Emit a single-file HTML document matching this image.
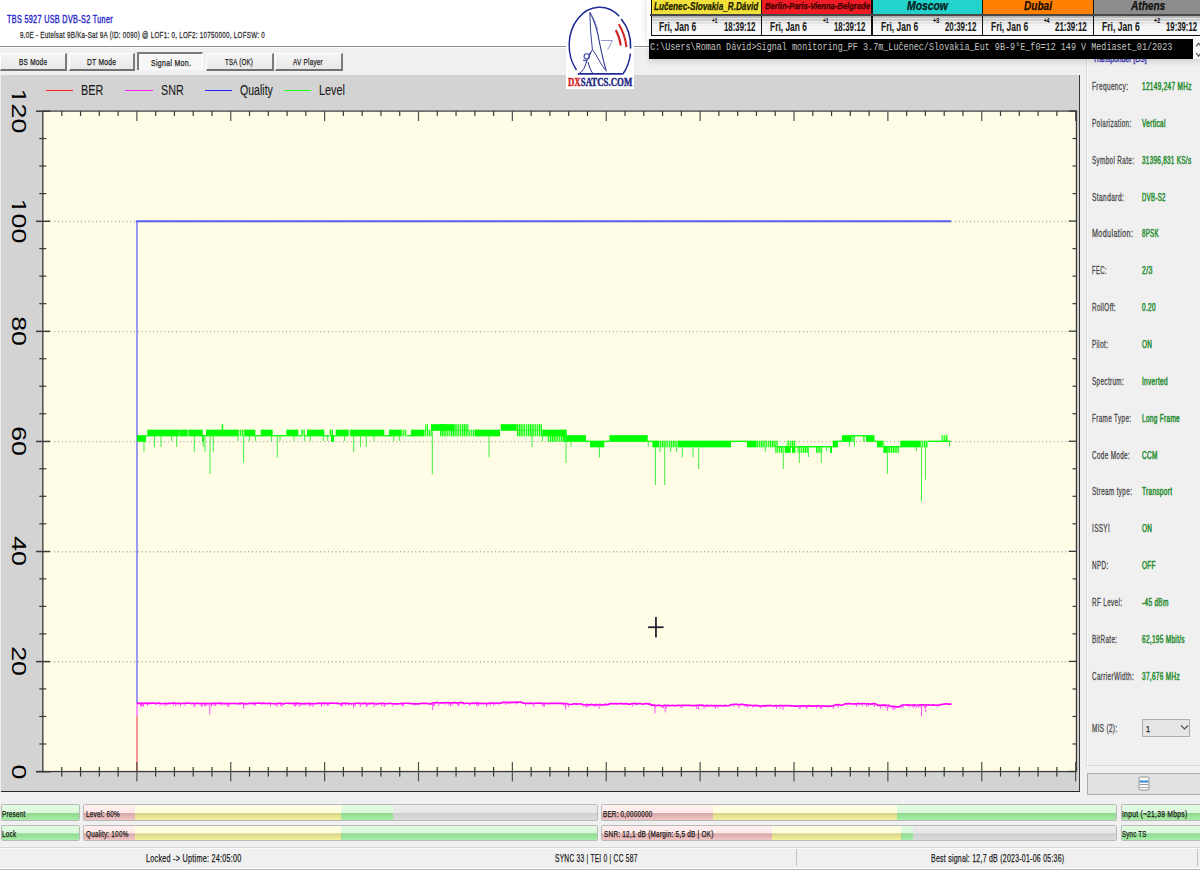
<!DOCTYPE html><html><head><meta charset="utf-8"><style>
*{margin:0;padding:0;box-sizing:border-box}
html,body{width:1200px;height:870px;overflow:hidden;background:#f0f0f0;font-family:"Liberation Sans",sans-serif}
body{position:relative}
.a{position:absolute}
.t{position:absolute;white-space:pre;transform-origin:0 0}
</style></head><body>
<div class="a" style="left:0;top:0;width:1200px;height:46px;background:#fff"></div>
<div class="a" style="left:0;top:46.2px;width:1200px;height:1px;background:#8c8c8c"></div>
<div class="a" style="left:0;top:47.2px;width:1200px;height:1px;background:#fcfcfc"></div>
<div class="t" style="left:7.40px;top:14.20px;font-size:10.60px;line-height:10.60px;color:#2424c8;font-weight:normal;font-style:normal;font-family:'Liberation Sans', sans-serif;transform:scaleX(0.6812);-webkit-text-stroke:0.40px #2424c8;letter-spacing:0.50px;">TBS 5927 USB DVB-S2 Tuner</div>
<div class="t" style="left:19.50px;top:30.30px;font-size:9.40px;line-height:9.40px;color:#333333;font-weight:normal;font-style:normal;font-family:'Liberation Sans', sans-serif;transform:scaleX(0.6663);-webkit-text-stroke:0.30px #333333;letter-spacing:0.40px;">9.0E - Eutelsat 9B/Ka-Sat 9A (ID: 0090) @ LOF1: 0, LOF2: 10750000, LOFSW: 0</div>
<div class="a" style="left:0.0px;top:52.5px;width:67.2px;height:18.8px;background:linear-gradient(#f4f4f4,#e9e9e9);border-top:1px solid #fff;border-left:1px solid #fff;border-right:2px solid #7c7c7c;border-bottom:2px solid #727272"></div>
<div class="t" style="left:19.00px;top:57.10px;font-size:9.80px;line-height:9.80px;color:#1a1a1a;font-weight:normal;font-style:normal;font-family:'Liberation Sans', sans-serif;transform:scaleX(0.6567);-webkit-text-stroke:0.25px #1a1a1a;letter-spacing:0.40px;">BS Mode</div>
<div class="a" style="left:68.5px;top:52.5px;width:66.7px;height:18.8px;background:linear-gradient(#f4f4f4,#e9e9e9);border-top:1px solid #fff;border-left:1px solid #fff;border-right:2px solid #7c7c7c;border-bottom:2px solid #727272"></div>
<div class="t" style="left:87.20px;top:57.10px;font-size:9.80px;line-height:9.80px;color:#1a1a1a;font-weight:normal;font-style:normal;font-family:'Liberation Sans', sans-serif;transform:scaleX(0.6823);-webkit-text-stroke:0.25px #1a1a1a;letter-spacing:0.40px;">DT Mode</div>
<div class="a" style="left:137.1px;top:52px;width:65.9px;height:18px;background:#f7f7f7;border-top:2px solid #7a7a7a;border-left:2px solid #7a7a7a;border-right:1px solid #fff"></div>
<div class="t" style="left:151.10px;top:58.10px;font-size:9.80px;line-height:9.80px;color:#1a1a1a;font-weight:normal;font-style:normal;font-family:'Liberation Sans', sans-serif;transform:scaleX(0.7162);-webkit-text-stroke:0.25px #1a1a1a;letter-spacing:0.40px;">Signal Mon.</div>
<div class="a" style="left:206.0px;top:52.5px;width:67.5px;height:18.8px;background:linear-gradient(#f4f4f4,#e9e9e9);border-top:1px solid #fff;border-left:1px solid #fff;border-right:2px solid #7c7c7c;border-bottom:2px solid #727272"></div>
<div class="t" style="left:225.30px;top:57.10px;font-size:9.80px;line-height:9.80px;color:#1a1a1a;font-weight:normal;font-style:normal;font-family:'Liberation Sans', sans-serif;transform:scaleX(0.6201);-webkit-text-stroke:0.25px #1a1a1a;letter-spacing:0.40px;">TSA (OK)</div>
<div class="a" style="left:275.0px;top:52.5px;width:67.8px;height:18.8px;background:linear-gradient(#f4f4f4,#e9e9e9);border-top:1px solid #fff;border-left:1px solid #fff;border-right:2px solid #7c7c7c;border-bottom:2px solid #727272"></div>
<div class="t" style="left:292.80px;top:57.10px;font-size:9.80px;line-height:9.80px;color:#1a1a1a;font-weight:normal;font-style:normal;font-family:'Liberation Sans', sans-serif;transform:scaleX(0.6457);-webkit-text-stroke:0.25px #1a1a1a;letter-spacing:0.40px;">AV Player</div>
<div class="a" style="left:1px;top:75px;width:1079.4px;height:717px;background:#d3d3d3;border-right:1.3px solid #3a3a3a;border-bottom:1.5px solid #2a2a2a"></div>
<div class="a" style="left:45.6px;top:89.8px;width:27.4px;height:1.4px;background:#ff2020"></div>
<div class="t" style="left:80.83px;top:82.50px;font-size:14.00px;line-height:14.00px;color:#1a1a1a;font-weight:normal;font-style:normal;font-family:'Liberation Sans', sans-serif;transform:scaleX(0.7732);-webkit-text-stroke:0.10px #1a1a1a;letter-spacing:0.00px;">BER</div>
<div class="a" style="left:125.0px;top:89.8px;width:27.7px;height:1.4px;background:#ff20ff"></div>
<div class="t" style="left:160.70px;top:82.50px;font-size:14.00px;line-height:14.00px;color:#1a1a1a;font-weight:normal;font-style:normal;font-family:'Liberation Sans', sans-serif;transform:scaleX(0.7674);-webkit-text-stroke:0.10px #1a1a1a;letter-spacing:0.00px;">SNR</div>
<div class="a" style="left:204.7px;top:89.8px;width:27.3px;height:1.4px;background:#2020ff"></div>
<div class="t" style="left:240.00px;top:82.50px;font-size:14.00px;line-height:14.00px;color:#1a1a1a;font-weight:normal;font-style:normal;font-family:'Liberation Sans', sans-serif;transform:scaleX(0.7551);-webkit-text-stroke:0.10px #1a1a1a;letter-spacing:0.00px;">Quality</div>
<div class="a" style="left:284.0px;top:89.8px;width:27.3px;height:1.4px;background:#20ff20"></div>
<div class="t" style="left:318.52px;top:82.50px;font-size:14.00px;line-height:14.00px;color:#1a1a1a;font-weight:normal;font-style:normal;font-family:'Liberation Sans', sans-serif;transform:scaleX(0.7757);-webkit-text-stroke:0.10px #1a1a1a;letter-spacing:0.00px;">Level</div>
<svg class="a" style="left:0;top:0" width="1200" height="870">
<rect x="43" y="111" width="1033" height="660.5" fill="#fffde6"/>
<line x1="54.3" y1="661.82" x2="1068" y2="661.82" stroke="#a4a49a" stroke-width="1.4" stroke-dasharray="1 2.8"/>
<line x1="54.3" y1="551.74" x2="1068" y2="551.74" stroke="#a4a49a" stroke-width="1.4" stroke-dasharray="1 2.8"/>
<line x1="54.3" y1="441.66" x2="1068" y2="441.66" stroke="#a4a49a" stroke-width="1.4" stroke-dasharray="1 2.8"/>
<line x1="54.3" y1="331.58" x2="1068" y2="331.58" stroke="#a4a49a" stroke-width="1.4" stroke-dasharray="1 2.8"/>
<line x1="54.3" y1="221.50" x2="1068" y2="221.50" stroke="#a4a49a" stroke-width="1.4" stroke-dasharray="1 2.8"/>
<line x1="137" y1="221" x2="137" y2="703" stroke="#9494f4" stroke-width="1.9"/>
<line x1="136.05" y1="221.2" x2="951" y2="221.2" stroke="#5c5cf4" stroke-width="1.9"/>
<line x1="137" y1="703" x2="137" y2="716" stroke="#ff90ff" stroke-width="1.9"/>
<line x1="137" y1="716" x2="137" y2="771" stroke="#ff9090" stroke-width="1.9"/>
<polyline points="137.0,703.28 138.5,703.16 140.0,703.51 141.5,703.10 143.0,703.43 144.5,703.31 146.0,703.10 147.5,703.41 149.0,703.08 150.5,703.36 152.0,703.11 153.5,703.12 155.0,703.36 156.5,703.64 158.0,703.15 159.5,703.22 161.0,703.50 162.5,703.73 164.0,703.47 165.5,703.34 167.0,703.75 168.5,703.10 170.0,703.67 171.5,703.27 173.0,703.17 174.5,703.15 176.0,703.29 177.5,703.64 179.0,703.20 180.5,703.48 182.0,703.52 183.5,703.33 185.0,703.46 186.5,703.12 188.0,703.12 189.5,703.22 191.0,703.55 192.5,703.38 194.0,703.30 195.5,703.49 197.0,703.40 198.5,703.29 200.0,703.64 201.5,703.57 203.0,703.26 204.5,703.49 206.0,703.45 207.5,703.70 209.0,703.60 210.5,703.29 212.0,703.77 213.5,703.17 215.0,703.38 216.5,703.62 218.0,703.20 219.5,703.44 221.0,703.12 222.5,703.56 224.0,703.63 225.5,703.50 227.0,703.71 228.5,703.32 230.0,703.58 231.5,703.52 233.0,703.51 234.5,703.42 236.0,703.69 237.5,703.76 239.0,703.43 240.5,703.57 242.0,703.15 243.5,703.60 245.0,703.56 246.5,703.80 248.0,703.68 249.5,703.31 251.0,703.38 252.5,703.58 254.0,703.13 255.5,703.43 257.0,703.23 258.5,703.19 260.0,703.15 261.5,703.65 263.0,703.21 264.5,703.29 266.0,703.39 267.5,703.73 269.0,703.17 270.5,703.43 272.0,703.50 273.5,703.74 275.0,703.69 276.5,703.73 278.0,703.32 279.5,703.41 281.0,703.38 282.5,703.74 284.0,703.80 285.5,703.23 287.0,703.25 288.5,703.29 290.0,703.29 291.5,703.47 293.0,703.54 294.5,703.32 296.0,703.14 297.5,703.43 299.0,703.39 300.5,703.53 302.0,703.80 303.5,703.62 305.0,703.50 306.5,703.57 308.0,703.61 309.5,703.18 311.0,703.77 312.5,703.69 314.0,703.75 315.5,703.70 317.0,703.42 318.5,703.42 320.0,703.22 321.5,703.59 323.0,703.19 324.5,703.19 326.0,703.29 327.5,703.26 329.0,703.39 330.5,703.19 332.0,703.15 333.5,703.26 335.0,703.23 336.5,703.41 338.0,703.18 339.5,703.77 341.0,703.59 342.5,703.27 344.0,703.34 345.5,703.41 347.0,703.42 348.5,703.25 350.0,703.76 351.5,703.87 353.0,703.50 354.5,703.51 356.0,703.24 357.5,703.25 359.0,703.42 360.5,703.37 362.0,703.76 363.5,703.30 365.0,703.20 366.5,703.85 368.0,703.56 369.5,703.29 371.0,703.57 372.5,703.21 374.0,703.56 375.5,703.88 377.0,703.80 378.5,703.69 380.0,703.38 381.5,703.46 383.0,703.32 384.5,703.74 386.0,703.58 387.5,703.75 389.0,703.44 390.5,703.37 392.0,703.78 393.5,703.90 395.0,703.81 396.5,703.78 398.0,703.79 399.5,703.74 401.0,703.38 402.5,703.58 404.0,703.47 405.5,703.25 407.0,703.25 408.5,703.42 410.0,703.41 411.5,703.72 413.0,703.90 414.5,703.55 416.0,703.89 417.5,703.93 419.0,703.91 420.5,703.49 422.0,703.40 423.5,703.40 425.0,703.38 426.5,703.39 428.0,703.68 429.5,703.88 431.0,703.84 432.5,702.91 434.0,702.81 435.5,702.92 437.0,702.42 438.5,702.83 440.0,703.01 441.5,702.93 443.0,702.91 444.5,702.72 446.0,702.52 447.5,702.95 449.0,702.64 450.5,702.97 452.0,703.10 453.5,702.70 455.0,702.71 456.5,703.09 458.0,702.94 459.5,702.56 461.0,702.54 462.5,702.68 464.0,703.58 465.5,703.51 467.0,703.05 468.5,703.53 470.0,703.64 471.5,703.41 473.0,703.20 474.5,703.33 476.0,703.04 477.5,702.96 479.0,703.63 480.5,703.40 482.0,703.32 483.5,703.60 485.0,703.25 486.5,703.56 488.0,703.53 489.5,703.10 491.0,703.13 492.5,703.16 494.0,703.12 495.5,703.36 497.0,703.13 498.5,703.24 500.0,703.04 501.5,702.91 503.0,702.30 504.5,702.37 506.0,702.46 507.5,702.68 509.0,702.34 510.5,702.69 512.0,702.40 513.5,702.42 515.0,702.42 516.5,702.06 518.0,702.36 519.5,702.18 521.0,702.05 522.5,702.83 524.0,703.07 525.5,703.28 527.0,703.46 528.5,703.34 530.0,703.18 531.5,703.31 533.0,703.34 534.5,703.50 536.0,703.02 537.5,703.34 539.0,703.12 540.5,703.14 542.0,703.49 543.5,703.31 545.0,703.34 546.5,703.48 548.0,703.59 549.5,703.26 551.0,703.38 552.5,703.30 554.0,703.31 555.5,703.43 557.0,703.27 558.5,703.32 560.0,703.28 561.5,703.61 563.0,703.44 564.5,703.56 566.0,703.61 567.5,703.81 569.0,704.24 570.5,704.51 572.0,704.44 573.5,703.95 575.0,703.94 576.5,704.16 578.0,703.90 579.5,704.02 581.0,703.90 582.5,704.44 584.0,704.90 585.5,704.98 587.0,704.46 588.5,704.85 590.0,704.81 591.5,704.45 593.0,704.97 594.5,705.03 596.0,704.50 597.5,705.02 599.0,704.63 600.5,704.69 602.0,705.04 603.5,704.93 605.0,704.46 606.5,704.65 608.0,704.71 609.5,703.91 611.0,703.59 612.5,703.67 614.0,703.96 615.5,703.46 617.0,703.84 618.5,703.76 620.0,703.46 621.5,703.68 623.0,703.89 624.5,703.81 626.0,703.50 627.5,704.14 629.0,704.00 630.5,704.13 632.0,703.52 633.5,703.64 635.0,703.48 636.5,704.00 638.0,703.64 639.5,703.54 641.0,703.75 642.5,704.09 644.0,704.02 645.5,703.63 647.0,703.55 648.5,704.09 650.0,703.85 651.5,705.22 653.0,705.21 654.5,705.19 656.0,705.64 657.5,705.45 659.0,705.21 660.5,705.82 662.0,705.61 663.5,705.73 665.0,705.23 666.5,705.77 668.0,705.22 669.5,705.78 671.0,705.49 672.5,705.41 674.0,705.57 675.5,705.83 677.0,705.37 678.5,705.27 680.0,705.56 681.5,705.36 683.0,705.27 684.5,705.31 686.0,705.23 687.5,705.34 689.0,705.42 690.5,705.41 692.0,705.73 693.5,705.41 695.0,705.56 696.5,705.33 698.0,705.45 699.5,705.22 701.0,705.39 702.5,705.23 704.0,705.73 705.5,705.61 707.0,705.35 708.5,705.56 710.0,705.88 711.5,705.30 713.0,705.80 714.5,705.53 716.0,705.58 717.5,705.82 719.0,705.51 720.5,705.59 722.0,705.72 723.5,705.93 725.0,705.48 726.5,705.83 728.0,705.74 729.5,705.47 731.0,704.63 732.5,704.59 734.0,704.39 735.5,704.44 737.0,704.40 738.5,704.87 740.0,704.53 741.5,704.46 743.0,704.41 744.5,704.94 746.0,704.96 747.5,705.04 749.0,705.45 750.5,705.45 752.0,705.51 753.5,705.65 755.0,705.47 756.5,705.70 758.0,705.60 759.5,706.11 761.0,706.13 762.5,705.84 764.0,705.63 765.5,706.14 767.0,705.69 768.5,705.72 770.0,705.48 771.5,705.75 773.0,705.82 774.5,705.84 776.0,705.63 777.5,705.85 779.0,705.50 780.5,705.69 782.0,705.57 783.5,705.79 785.0,705.55 786.5,705.54 788.0,705.74 789.5,705.69 791.0,705.94 792.5,705.91 794.0,706.07 795.5,706.01 797.0,706.05 798.5,706.17 800.0,705.83 801.5,705.79 803.0,706.26 804.5,705.67 806.0,706.08 807.5,706.03 809.0,705.61 810.5,706.17 812.0,706.21 813.5,706.03 815.0,706.11 816.5,706.17 818.0,705.70 819.5,705.98 821.0,705.97 822.5,706.20 824.0,706.19 825.5,706.21 827.0,706.04 828.5,706.26 830.0,706.12 831.5,706.13 833.0,705.81 834.5,705.42 836.0,704.74 837.5,704.90 839.0,704.72 840.5,705.24 842.0,705.04 843.5,704.79 845.0,703.89 846.5,703.93 848.0,703.79 849.5,703.45 851.0,704.01 852.5,703.97 854.0,703.80 855.5,703.82 857.0,703.91 858.5,703.50 860.0,703.97 861.5,703.63 863.0,703.50 864.5,703.64 866.0,703.96 867.5,703.59 869.0,703.97 870.5,704.13 872.0,703.80 873.5,703.72 875.0,703.79 876.5,704.30 878.0,705.49 879.5,705.38 881.0,705.40 882.5,705.00 884.0,705.05 885.5,705.13 887.0,705.47 888.5,705.16 890.0,706.05 891.5,706.36 893.0,706.39 894.5,706.54 896.0,706.82 897.5,706.83 899.0,706.82 900.5,706.13 902.0,705.01 903.5,704.98 905.0,704.98 906.5,704.73 908.0,705.28 909.5,704.79 911.0,705.33 912.5,705.31 914.0,704.66 915.5,704.97 917.0,705.22 918.5,705.33 920.0,704.96 921.5,704.84 923.0,704.80 924.5,705.31 926.0,704.80 927.5,705.06 929.0,704.75 930.5,705.02 932.0,705.32 933.5,704.74 935.0,705.22 936.5,705.01 938.0,705.27 939.5,705.14 941.0,704.41 942.5,704.48 944.0,704.19 945.5,703.87 947.0,703.85 948.5,704.19 950.0,704.17 951.5,704.06" fill="none" stroke="#ff00ff" stroke-width="1.7"/>
<rect x="254.0" y="703.96" width="0.9" height="2.0" fill="#ff40ff"/>
<rect x="444.6" y="703.24" width="0.9" height="1.5" fill="#ff40ff"/>
<rect x="820.6" y="706.46" width="0.9" height="1.5" fill="#ff40ff"/>
<rect x="402.9" y="704.07" width="0.9" height="2.0" fill="#ff40ff"/>
<rect x="819.7" y="706.46" width="0.9" height="1.5" fill="#ff40ff"/>
<rect x="901.3" y="706.09" width="0.9" height="2.0" fill="#ff40ff"/>
<rect x="717.5" y="706.09" width="0.9" height="2.0" fill="#ff40ff"/>
<rect x="345.1" y="704.01" width="0.9" height="1.5" fill="#ff40ff"/>
<rect x="458.2" y="703.29" width="0.9" height="3.0" fill="#ff40ff"/>
<rect x="201.9" y="703.93" width="0.9" height="2.5" fill="#ff40ff"/>
<rect x="752.1" y="706.16" width="0.9" height="1.5" fill="#ff40ff"/>
<rect x="367.3" y="704.04" width="0.9" height="1.5" fill="#ff40ff"/>
<rect x="816.1" y="706.45" width="0.9" height="2.0" fill="#ff40ff"/>
<rect x="654.3" y="706.00" width="0.9" height="2.0" fill="#ff40ff"/>
<rect x="342.0" y="704.01" width="0.9" height="2.0" fill="#ff40ff"/>
<rect x="493.4" y="703.80" width="0.9" height="2.0" fill="#ff40ff"/>
<rect x="293.8" y="703.98" width="0.9" height="2.0" fill="#ff40ff"/>
<rect x="776.0" y="706.34" width="0.9" height="2.5" fill="#ff40ff"/>
<rect x="856.3" y="704.30" width="0.9" height="2.5" fill="#ff40ff"/>
<rect x="879.9" y="705.80" width="0.9" height="3.0" fill="#ff40ff"/>
<rect x="584.9" y="705.20" width="0.9" height="1.5" fill="#ff40ff"/>
<rect x="180.1" y="703.92" width="0.9" height="2.5" fill="#ff40ff"/>
<rect x="505.2" y="702.90" width="0.9" height="2.0" fill="#ff40ff"/>
<rect x="662.0" y="706.01" width="0.9" height="2.0" fill="#ff40ff"/>
<rect x="533.3" y="703.80" width="0.9" height="3.0" fill="#ff40ff"/>
<rect x="243.1" y="703.95" width="0.9" height="2.5" fill="#ff40ff"/>
<rect x="476.0" y="703.80" width="0.9" height="2.0" fill="#ff40ff"/>
<rect x="381.2" y="704.05" width="0.9" height="2.0" fill="#ff40ff"/>
<rect x="469.0" y="703.80" width="0.9" height="2.0" fill="#ff40ff"/>
<rect x="383.7" y="704.05" width="0.9" height="3.0" fill="#ff40ff"/>
<rect x="681.8" y="706.04" width="0.9" height="1.5" fill="#ff40ff"/>
<rect x="275.5" y="703.97" width="0.9" height="2.0" fill="#ff40ff"/>
<rect x="200.9" y="703.93" width="0.9" height="3.0" fill="#ff40ff"/>
<rect x="873.8" y="704.30" width="0.9" height="2.5" fill="#ff40ff"/>
<rect x="585.8" y="705.20" width="0.9" height="2.5" fill="#ff40ff"/>
<rect x="874.1" y="704.30" width="0.9" height="2.5" fill="#ff40ff"/>
<rect x="486.2" y="703.80" width="0.9" height="3.0" fill="#ff40ff"/>
<rect x="295.8" y="703.98" width="0.9" height="1.5" fill="#ff40ff"/>
<rect x="281.5" y="703.97" width="0.9" height="3.0" fill="#ff40ff"/>
<rect x="213.8" y="703.94" width="0.9" height="2.0" fill="#ff40ff"/>
<rect x="438.3" y="703.22" width="0.9" height="3.0" fill="#ff40ff"/>
<rect x="303.7" y="703.99" width="0.9" height="1.5" fill="#ff40ff"/>
<rect x="747.2" y="705.30" width="0.9" height="2.5" fill="#ff40ff"/>
<rect x="450.1" y="703.26" width="0.9" height="3.0" fill="#ff40ff"/>
<rect x="310.1" y="703.99" width="0.9" height="2.0" fill="#ff40ff"/>
<rect x="413.9" y="704.08" width="0.9" height="1.5" fill="#ff40ff"/>
<rect x="543.5" y="703.80" width="0.9" height="3.0" fill="#ff40ff"/>
<rect x="923.8" y="705.50" width="0.9" height="2.0" fill="#ff40ff"/>
<rect x="696.3" y="706.06" width="0.9" height="3.0" fill="#ff40ff"/>
<rect x="650.0" y="704.30" width="0.9" height="2.0" fill="#ff40ff"/>
<rect x="215.0" y="703.94" width="0.9" height="2.0" fill="#ff40ff"/>
<rect x="451.5" y="703.26" width="0.9" height="2.5" fill="#ff40ff"/>
<rect x="489.8" y="703.80" width="0.9" height="2.0" fill="#ff40ff"/>
<rect x="827.4" y="706.48" width="0.9" height="1.5" fill="#ff40ff"/>
<rect x="243.1" y="703.95" width="0.9" height="2.5" fill="#ff40ff"/>
<rect x="714.7" y="706.08" width="0.9" height="2.5" fill="#ff40ff"/>
<rect x="924.3" y="705.50" width="0.9" height="2.5" fill="#ff40ff"/>
<rect x="140.1" y="703.90" width="0.9" height="2.5" fill="#ff40ff"/>
<rect x="893.5" y="707.20" width="0.9" height="3.0" fill="#ff40ff"/>
<rect x="832.9" y="706.50" width="0.9" height="2.5" fill="#ff40ff"/>
<rect x="341.3" y="704.01" width="0.9" height="1.5" fill="#ff40ff"/>
<rect x="321.3" y="704.00" width="0.9" height="2.0" fill="#ff40ff"/>
<rect x="563.1" y="703.80" width="0.9" height="1.5" fill="#ff40ff"/>
<rect x="902.6" y="705.50" width="0.9" height="2.5" fill="#ff40ff"/>
<rect x="208.9" y="703.94" width="0.9" height="1.5" fill="#ff40ff"/>
<rect x="141.1" y="703.90" width="0.9" height="2.0" fill="#ff40ff"/>
<rect x="328.4" y="704.00" width="0.9" height="1.5" fill="#ff40ff"/>
<rect x="662.9" y="706.01" width="0.9" height="2.0" fill="#ff40ff"/>
<rect x="919.6" y="705.50" width="0.9" height="2.0" fill="#ff40ff"/>
<rect x="567.9" y="704.65" width="0.9" height="2.5" fill="#ff40ff"/>
<rect x="705.9" y="706.07" width="0.9" height="1.5" fill="#ff40ff"/>
<rect x="220.6" y="703.94" width="0.9" height="2.0" fill="#ff40ff"/>
<rect x="564.8" y="703.80" width="0.9" height="3.0" fill="#ff40ff"/>
<rect x="295.3" y="703.98" width="0.9" height="2.0" fill="#ff40ff"/>
<rect x="321.1" y="704.00" width="0.9" height="3.0" fill="#ff40ff"/>
<rect x="140.9" y="703.90" width="0.9" height="3.0" fill="#ff40ff"/>
<rect x="384.2" y="704.05" width="0.9" height="2.5" fill="#ff40ff"/>
<rect x="365.7" y="704.04" width="0.9" height="2.0" fill="#ff40ff"/>
<rect x="662.1" y="706.01" width="0.9" height="2.0" fill="#ff40ff"/>
<rect x="525.0" y="703.80" width="0.9" height="2.0" fill="#ff40ff"/>
<rect x="583.1" y="704.97" width="0.9" height="1.5" fill="#ff40ff"/>
<rect x="918.1" y="705.50" width="0.9" height="2.0" fill="#ff40ff"/>
<rect x="184.8" y="703.92" width="0.9" height="2.0" fill="#ff40ff"/>
<rect x="543.6" y="703.80" width="0.9" height="2.5" fill="#ff40ff"/>
<rect x="205.7" y="703.94" width="0.9" height="2.0" fill="#ff40ff"/>
<rect x="680.6" y="706.04" width="0.9" height="2.0" fill="#ff40ff"/>
<rect x="323.7" y="704.00" width="0.9" height="1.5" fill="#ff40ff"/>
<rect x="703.6" y="706.07" width="0.9" height="2.5" fill="#ff40ff"/>
<rect x="433.5" y="703.20" width="0.9" height="2.5" fill="#ff40ff"/>
<rect x="300.4" y="703.98" width="0.9" height="2.0" fill="#ff40ff"/>
<rect x="738.7" y="705.20" width="0.9" height="3.0" fill="#ff40ff"/>
<rect x="194.6" y="703.93" width="0.9" height="2.5" fill="#ff40ff"/>
<rect x="925.6" y="705.50" width="0.9" height="2.0" fill="#ff40ff"/>
<rect x="760.3" y="706.30" width="0.9" height="2.0" fill="#ff40ff"/>
<rect x="327.0" y="704.00" width="0.9" height="2.0" fill="#ff40ff"/>
<rect x="354.7" y="704.02" width="0.9" height="2.0" fill="#ff40ff"/>
<rect x="228.3" y="703.95" width="0.9" height="3.0" fill="#ff40ff"/>
<rect x="541.6" y="703.80" width="0.9" height="2.0" fill="#ff40ff"/>
<rect x="866.1" y="704.30" width="0.9" height="2.5" fill="#ff40ff"/>
<rect x="477.8" y="703.80" width="0.9" height="1.5" fill="#ff40ff"/>
<rect x="908.5" y="705.50" width="0.9" height="2.0" fill="#ff40ff"/>
<rect x="886.8" y="705.80" width="0.9" height="1.5" fill="#ff40ff"/>
<rect x="312.5" y="703.99" width="0.9" height="3.0" fill="#ff40ff"/>
<rect x="254.9" y="703.96" width="0.9" height="1.5" fill="#ff40ff"/>
<rect x="715.0" y="706.08" width="0.9" height="2.0" fill="#ff40ff"/>
<rect x="458.6" y="703.29" width="0.9" height="2.0" fill="#ff40ff"/>
<rect x="733.5" y="705.20" width="0.9" height="1.5" fill="#ff40ff"/>
<rect x="894.6" y="707.20" width="0.9" height="2.0" fill="#ff40ff"/>
<rect x="294.5" y="703.98" width="0.9" height="3.0" fill="#ff40ff"/>
<rect x="744.5" y="705.20" width="0.9" height="1.5" fill="#ff40ff"/>
<rect x="392.6" y="704.06" width="0.9" height="2.5" fill="#ff40ff"/>
<rect x="819.7" y="706.46" width="0.9" height="2.0" fill="#ff40ff"/>
<rect x="498.4" y="703.80" width="0.9" height="1.5" fill="#ff40ff"/>
<rect x="142.3" y="703.90" width="0.9" height="2.0" fill="#ff40ff"/>
<rect x="205.4" y="703.94" width="0.9" height="2.5" fill="#ff40ff"/>
<rect x="914.0" y="705.50" width="0.9" height="1.5" fill="#ff40ff"/>
<rect x="594.5" y="705.20" width="0.9" height="2.0" fill="#ff40ff"/>
<rect x="447.9" y="703.25" width="0.9" height="2.0" fill="#ff40ff"/>
<rect x="805.8" y="706.42" width="0.9" height="2.5" fill="#ff40ff"/>
<rect x="211.1" y="703.94" width="0.9" height="2.5" fill="#ff40ff"/>
<rect x="298.5" y="703.98" width="0.9" height="3.0" fill="#ff40ff"/>
<rect x="884.8" y="705.80" width="0.9" height="2.0" fill="#ff40ff"/>
<rect x="401.9" y="704.07" width="0.9" height="2.5" fill="#ff40ff"/>
<rect x="164.5" y="703.91" width="0.9" height="2.5" fill="#ff40ff"/>
<rect x="340.9" y="704.01" width="0.9" height="2.5" fill="#ff40ff"/>
<rect x="172.9" y="703.92" width="0.9" height="1.5" fill="#ff40ff"/>
<rect x="515.9" y="702.90" width="0.9" height="1.5" fill="#ff40ff"/>
<rect x="348.2" y="704.02" width="0.9" height="1.5" fill="#ff40ff"/>
<rect x="867.8" y="704.30" width="0.9" height="2.0" fill="#ff40ff"/>
<rect x="434.0" y="703.20" width="0.9" height="2.0" fill="#ff40ff"/>
<rect x="915.7" y="705.50" width="0.9" height="3.0" fill="#ff40ff"/>
<rect x="175.3" y="703.92" width="0.9" height="2.0" fill="#ff40ff"/>
<rect x="888.6" y="705.80" width="0.9" height="2.0" fill="#ff40ff"/>
<rect x="143.1" y="703.90" width="0.9" height="3.0" fill="#ff40ff"/>
<rect x="882.3" y="705.80" width="0.9" height="1.5" fill="#ff40ff"/>
<rect x="159.6" y="703.91" width="0.9" height="2.0" fill="#ff40ff"/>
<rect x="226.9" y="703.95" width="0.9" height="2.5" fill="#ff40ff"/>
<rect x="912.7" y="705.50" width="0.9" height="2.5" fill="#ff40ff"/>
<rect x="779.7" y="706.35" width="0.9" height="2.5" fill="#ff40ff"/>
<rect x="800.0" y="706.41" width="0.9" height="2.0" fill="#ff40ff"/>
<rect x="891.8" y="707.20" width="0.9" height="2.0" fill="#ff40ff"/>
<rect x="147.1" y="703.91" width="0.9" height="2.0" fill="#ff40ff"/>
<rect x="806.4" y="706.43" width="0.9" height="2.0" fill="#ff40ff"/>
<rect x="631.9" y="704.30" width="0.9" height="2.0" fill="#ff40ff"/>
<rect x="837.6" y="705.50" width="0.9" height="2.5" fill="#ff40ff"/>
<rect x="433.1" y="703.20" width="0.9" height="3.0" fill="#ff40ff"/>
<rect x="204.0" y="703.93" width="0.9" height="2.0" fill="#ff40ff"/>
<rect x="457.3" y="703.28" width="0.9" height="2.0" fill="#ff40ff"/>
<rect x="340.3" y="704.01" width="0.9" height="1.5" fill="#ff40ff"/>
<rect x="666.1" y="706.02" width="0.9" height="2.5" fill="#ff40ff"/>
<rect x="587.6" y="705.20" width="0.9" height="2.0" fill="#ff40ff"/>
<rect x="270.2" y="703.97" width="0.9" height="2.5" fill="#ff40ff"/>
<rect x="855.6" y="704.30" width="0.9" height="1.5" fill="#ff40ff"/>
<rect x="354.6" y="704.02" width="0.9" height="1.5" fill="#ff40ff"/>
<rect x="308.8" y="703.99" width="0.9" height="2.5" fill="#ff40ff"/>
<rect x="543.8" y="703.80" width="0.9" height="2.5" fill="#ff40ff"/>
<rect x="280.3" y="703.97" width="0.9" height="2.0" fill="#ff40ff"/>
<rect x="477.6" y="703.80" width="0.9" height="3.0" fill="#ff40ff"/>
<rect x="861.9" y="704.30" width="0.9" height="2.0" fill="#ff40ff"/>
<rect x="745.9" y="705.20" width="0.9" height="1.5" fill="#ff40ff"/>
<rect x="193.5" y="703.43" width="1" height="3.6" fill="#ff50ff"/>
<rect x="209.3" y="703.44" width="1" height="11.1" fill="#ff50ff"/>
<rect x="243.3" y="703.46" width="1" height="5.5" fill="#ff50ff"/>
<rect x="276.5" y="703.47" width="1" height="3.5" fill="#ff50ff"/>
<rect x="353.0" y="703.52" width="1" height="4.3" fill="#ff50ff"/>
<rect x="359.8" y="703.53" width="1" height="3.5" fill="#ff50ff"/>
<rect x="366.2" y="703.54" width="1" height="3.5" fill="#ff50ff"/>
<rect x="373.5" y="703.54" width="1" height="3.5" fill="#ff50ff"/>
<rect x="432.2" y="702.84" width="1" height="7.2" fill="#ff50ff"/>
<rect x="565.2" y="703.30" width="1" height="6.4" fill="#ff50ff"/>
<rect x="598.5" y="704.70" width="1" height="4.1" fill="#ff50ff"/>
<rect x="654.5" y="705.50" width="1" height="7.8" fill="#ff50ff"/>
<rect x="664.7" y="705.52" width="1" height="6.9" fill="#ff50ff"/>
<rect x="698.1" y="705.56" width="1" height="4.1" fill="#ff50ff"/>
<rect x="782.5" y="705.86" width="1" height="4.1" fill="#ff50ff"/>
<rect x="798.5" y="705.91" width="1" height="3.1" fill="#ff50ff"/>
<rect x="821.0" y="705.97" width="1" height="3.0" fill="#ff50ff"/>
<rect x="887.1" y="705.30" width="1" height="5.7" fill="#ff50ff"/>
<rect x="921.0" y="705.00" width="1" height="11.6" fill="#ff50ff"/>
<rect x="925.3" y="705.00" width="1" height="6.9" fill="#ff50ff"/>
<rect x="146.0" y="435.11" width="1.3" height="1.3" fill="#00ff00"/>
<rect x="202.7" y="435.11" width="3.3" height="1.3" fill="#00ff00"/>
<rect x="255.3" y="435.11" width="5.4" height="1.3" fill="#00ff00"/>
<rect x="272.7" y="435.11" width="13.3" height="1.3" fill="#00ff00"/>
<rect x="298.3" y="435.11" width="2.7" height="1.3" fill="#00ff00"/>
<rect x="305.0" y="435.11" width="2.0" height="1.3" fill="#00ff00"/>
<rect x="324.3" y="435.11" width="4.7" height="1.3" fill="#00ff00"/>
<rect x="333.0" y="435.11" width="2.7" height="1.3" fill="#00ff00"/>
<rect x="384.3" y="435.11" width="4.7" height="1.3" fill="#00ff00"/>
<rect x="407.0" y="435.11" width="4.0" height="1.3" fill="#00ff00"/>
<rect x="586.0" y="440.61" width="4.0" height="1.3" fill="#00ff00"/>
<rect x="604.3" y="440.61" width="5.1" height="1.3" fill="#00ff00"/>
<rect x="647.7" y="440.61" width="4.6" height="1.3" fill="#00ff00"/>
<rect x="731.0" y="440.61" width="16.0" height="1.3" fill="#00ff00"/>
<rect x="778.0" y="446.11" width="54.7" height="1.3" fill="#00ff00"/>
<rect x="838.0" y="440.61" width="4.0" height="1.3" fill="#00ff00"/>
<rect x="851.3" y="435.11" width="14.7" height="1.3" fill="#00ff00"/>
<rect x="874.5" y="440.61" width="2.5" height="1.3" fill="#00ff00"/>
<rect x="884.3" y="446.11" width="16.0" height="1.3" fill="#00ff00"/>
<rect x="927.8" y="440.61" width="23.2" height="1.3" fill="#00ff00"/>
<defs><pattern id="st" x="0" y="0" width="2.2" height="10" patternUnits="userSpaceOnUse"><rect x="0" y="0" width="1.2" height="10" fill="#00ff00"/><rect x="1.2" y="0" width="1" height="10" fill="#00ff00" fill-opacity="0.25"/></pattern></defs>
<rect x="137.0" y="435.16" width="9.0" height="6.70" fill="#00ff00"/>
<rect x="147.3" y="429.65" width="30.7" height="6.70" fill="#00ff00"/>
<rect x="178.0" y="429.65" width="1.3" height="6.70" fill="url(#st)"/>
<rect x="179.3" y="429.65" width="8.0" height="6.70" fill="#00ff00"/>
<rect x="187.3" y="429.65" width="1.4" height="6.70" fill="url(#st)"/>
<rect x="188.7" y="429.65" width="14.0" height="6.70" fill="#00ff00"/>
<rect x="202.0" y="435.16" width="2.0" height="6.70" fill="#00ff00"/>
<rect x="206.0" y="429.65" width="32.0" height="6.70" fill="#00ff00"/>
<rect x="238.0" y="429.65" width="6.7" height="6.70" fill="url(#st)"/>
<rect x="244.7" y="429.65" width="10.6" height="6.70" fill="#00ff00"/>
<rect x="260.7" y="429.65" width="12.0" height="6.70" fill="#00ff00"/>
<rect x="221.3" y="424.15" width="2.0" height="6.70" fill="url(#st)"/>
<rect x="286.3" y="429.65" width="12.0" height="6.70" fill="#00ff00"/>
<rect x="301.0" y="429.65" width="4.0" height="6.70" fill="url(#st)"/>
<rect x="307.0" y="429.65" width="17.3" height="6.70" fill="#00ff00"/>
<rect x="329.0" y="429.65" width="4.0" height="6.70" fill="url(#st)"/>
<rect x="331.0" y="435.16" width="3.0" height="6.70" fill="#00ff00"/>
<rect x="335.7" y="429.65" width="12.6" height="6.70" fill="#00ff00"/>
<rect x="348.3" y="429.65" width="2.7" height="6.70" fill="url(#st)"/>
<rect x="351.0" y="429.65" width="33.3" height="6.70" fill="#00ff00"/>
<rect x="389.0" y="429.65" width="12.0" height="6.70" fill="#00ff00"/>
<rect x="401.0" y="429.65" width="6.0" height="6.70" fill="url(#st)"/>
<rect x="411.0" y="429.65" width="13.3" height="6.70" fill="#00ff00"/>
<rect x="424.3" y="429.65" width="7.4" height="6.70" fill="url(#st)"/>
<rect x="425.0" y="424.15" width="3.0" height="6.70" fill="url(#st)"/>
<rect x="431.0" y="424.15" width="13.3" height="6.70" fill="#00ff00"/>
<rect x="440.0" y="424.15" width="14.7" height="6.70" fill="#00ff00"/>
<rect x="454.7" y="424.15" width="14.0" height="6.70" fill="url(#st)"/>
<rect x="440.0" y="429.65" width="16.0" height="6.70" fill="url(#st)"/>
<rect x="456.0" y="429.65" width="19.0" height="6.70" fill="url(#st)"/>
<rect x="475.0" y="429.65" width="25.0" height="6.70" fill="#00ff00"/>
<rect x="500.7" y="424.15" width="16.0" height="6.70" fill="#00ff00"/>
<rect x="516.7" y="424.15" width="25.3" height="6.70" fill="url(#st)"/>
<rect x="516.7" y="429.65" width="24.3" height="6.70" fill="url(#st)"/>
<rect x="541.0" y="429.65" width="25.7" height="6.70" fill="#00ff00"/>
<rect x="547.3" y="435.16" width="16.7" height="6.70" fill="url(#st)"/>
<rect x="564.0" y="435.16" width="22.0" height="6.70" fill="#00ff00"/>
<rect x="590.0" y="440.66" width="14.3" height="6.70" fill="#00ff00"/>
<rect x="609.4" y="435.16" width="38.3" height="6.70" fill="#00ff00"/>
<rect x="652.3" y="440.66" width="6.7" height="6.70" fill="#00ff00"/>
<rect x="659.0" y="440.66" width="19.0" height="6.70" fill="url(#st)"/>
<rect x="678.0" y="440.66" width="53.0" height="6.70" fill="#00ff00"/>
<rect x="747.0" y="440.66" width="9.7" height="6.70" fill="#00ff00"/>
<rect x="756.7" y="440.66" width="21.3" height="6.70" fill="url(#st)"/>
<rect x="775.0" y="446.16" width="8.0" height="6.70" fill="url(#st)"/>
<rect x="784.7" y="446.16" width="6.0" height="6.70" fill="#00ff00"/>
<rect x="792.0" y="446.16" width="3.3" height="6.70" fill="#00ff00"/>
<rect x="797.3" y="446.16" width="11.4" height="6.70" fill="url(#st)"/>
<rect x="816.0" y="446.16" width="6.7" height="6.70" fill="url(#st)"/>
<rect x="830.0" y="446.16" width="2.0" height="6.70" fill="#00ff00"/>
<rect x="786.7" y="440.66" width="8.6" height="6.70" fill="url(#st)"/>
<rect x="832.7" y="440.66" width="5.3" height="6.70" fill="#00ff00"/>
<rect x="842.0" y="435.16" width="9.3" height="6.70" fill="#00ff00"/>
<rect x="851.3" y="435.16" width="3.7" height="6.70" fill="url(#st)"/>
<rect x="863.0" y="435.16" width="2.0" height="6.70" fill="url(#st)"/>
<rect x="866.0" y="435.16" width="8.5" height="6.70" fill="#00ff00"/>
<rect x="877.0" y="440.66" width="5.2" height="6.70" fill="#00ff00"/>
<rect x="882.2" y="440.66" width="2.1" height="6.70" fill="url(#st)"/>
<rect x="883.3" y="446.16" width="5.4" height="6.70" fill="#00ff00"/>
<rect x="888.7" y="446.16" width="10.6" height="6.70" fill="url(#st)"/>
<rect x="900.3" y="440.66" width="19.7" height="6.70" fill="#00ff00"/>
<rect x="920.0" y="440.66" width="7.8" height="6.70" fill="url(#st)"/>
<rect x="941.2" y="435.16" width="6.8" height="6.70" fill="url(#st)"/>
<rect x="143.5" y="441.3" width="1" height="10.4" fill="#40f040"/>
<rect x="153.9" y="435.8" width="1" height="11.2" fill="#40f040"/>
<rect x="160.5" y="435.8" width="1" height="11.2" fill="#40f040"/>
<rect x="171.1" y="435.8" width="1" height="5.2" fill="#40f040"/>
<rect x="176.2" y="435.8" width="1" height="11.2" fill="#40f040"/>
<rect x="193.8" y="435.8" width="1" height="15.9" fill="#40f040"/>
<rect x="202.8" y="435.8" width="1" height="11.2" fill="#40f040"/>
<rect x="204.5" y="435.8" width="1" height="15.9" fill="#40f040"/>
<rect x="209.5" y="435.8" width="1" height="38.2" fill="#40f040"/>
<rect x="212.8" y="435.8" width="1" height="15.9" fill="#40f040"/>
<rect x="237.5" y="435.8" width="1" height="5.2" fill="#40f040"/>
<rect x="243.1" y="435.8" width="1" height="26.9" fill="#40f040"/>
<rect x="248.8" y="435.8" width="1" height="5.2" fill="#40f040"/>
<rect x="254.8" y="435.8" width="1" height="5.2" fill="#40f040"/>
<rect x="271.1" y="435.8" width="1" height="5.2" fill="#40f040"/>
<rect x="276.8" y="435.8" width="1" height="21.9" fill="#40f040"/>
<rect x="279.5" y="435.8" width="1" height="5.2" fill="#40f040"/>
<rect x="293.5" y="435.8" width="1" height="5.2" fill="#40f040"/>
<rect x="304.2" y="435.8" width="1" height="5.2" fill="#40f040"/>
<rect x="309.8" y="435.8" width="1" height="5.2" fill="#40f040"/>
<rect x="322.8" y="435.8" width="1" height="5.2" fill="#40f040"/>
<rect x="327.2" y="435.8" width="1" height="5.2" fill="#40f040"/>
<rect x="344.1" y="435.8" width="1" height="5.2" fill="#40f040"/>
<rect x="353.2" y="435.8" width="1" height="16.2" fill="#40f040"/>
<rect x="360.1" y="435.8" width="1" height="11.2" fill="#40f040"/>
<rect x="365.8" y="435.8" width="1" height="11.2" fill="#40f040"/>
<rect x="373.5" y="435.8" width="1" height="5.2" fill="#40f040"/>
<rect x="393.2" y="435.8" width="1" height="5.2" fill="#40f040"/>
<rect x="398.8" y="435.8" width="1" height="5.2" fill="#40f040"/>
<rect x="431.8" y="430.3" width="1" height="44.0" fill="#40f040"/>
<rect x="488.5" y="435.8" width="1" height="21.5" fill="#40f040"/>
<rect x="531.5" y="430.3" width="1" height="16.7" fill="#40f040"/>
<rect x="541.9" y="430.3" width="1" height="11.3" fill="#40f040"/>
<rect x="565.5" y="435.8" width="1" height="27.2" fill="#40f040"/>
<rect x="570.5" y="441.3" width="1" height="5.4" fill="#40f040"/>
<rect x="598.9" y="446.8" width="1" height="10.7" fill="#40f040"/>
<rect x="647.8" y="441.3" width="1" height="5.4" fill="#40f040"/>
<rect x="654.9" y="446.8" width="1" height="38.2" fill="#40f040"/>
<rect x="659.5" y="446.8" width="1" height="5.2" fill="#40f040"/>
<rect x="664.2" y="446.8" width="1" height="38.2" fill="#40f040"/>
<rect x="670.2" y="446.8" width="1" height="5.2" fill="#40f040"/>
<rect x="676.2" y="446.8" width="1" height="5.2" fill="#40f040"/>
<rect x="681.8" y="446.8" width="1" height="10.5" fill="#40f040"/>
<rect x="692.5" y="446.8" width="1" height="10.5" fill="#40f040"/>
<rect x="698.2" y="446.8" width="1" height="22.2" fill="#40f040"/>
<rect x="764.8" y="446.8" width="1" height="4.7" fill="#40f040"/>
<rect x="782.8" y="446.8" width="1" height="22.2" fill="#40f040"/>
<rect x="798.8" y="446.8" width="1" height="16.2" fill="#40f040"/>
<rect x="807.9" y="446.8" width="1" height="10.2" fill="#40f040"/>
<rect x="820.8" y="446.8" width="1" height="16.2" fill="#40f040"/>
<rect x="825.9" y="446.8" width="1" height="4.2" fill="#40f040"/>
<rect x="848.8" y="441.3" width="1" height="5.2" fill="#40f040"/>
<rect x="853.9" y="435.8" width="1" height="10.9" fill="#40f040"/>
<rect x="886.9" y="446.8" width="1" height="27.2" fill="#40f040"/>
<rect x="915.9" y="446.8" width="1" height="4.2" fill="#40f040"/>
<rect x="921.0" y="446.8" width="1" height="54.7" fill="#40f040"/>
<rect x="925.0" y="446.8" width="1" height="32.7" fill="#40f040"/>
<rect x="949.0" y="441.3" width="1" height="5.4" fill="#40f040"/>
<rect x="42" y="110.5" width="1034.5" height="1.2" fill="#3a3a3a"/>
<rect x="36" y="770.9" width="1040.5" height="1.3" fill="#3a3a3a"/>
<rect x="42.2" y="110.5" width="1.3" height="661" fill="#3a3a3a"/>
<rect x="1075.8" y="110.5" width="1.3" height="661" fill="#3a3a3a"/>
<rect x="61.17" y="767" width="1.2" height="9.6" fill="#3a3a3a"/>
<rect x="61.17" y="111" width="1.2" height="5" fill="#3a3a3a"/>
<rect x="79.95" y="767" width="1.2" height="9.6" fill="#3a3a3a"/>
<rect x="79.95" y="111" width="1.2" height="5" fill="#3a3a3a"/>
<rect x="98.72" y="767" width="1.2" height="9.6" fill="#3a3a3a"/>
<rect x="98.72" y="111" width="1.2" height="5" fill="#3a3a3a"/>
<rect x="117.50" y="767" width="1.2" height="9.6" fill="#3a3a3a"/>
<rect x="117.50" y="111" width="1.2" height="5" fill="#3a3a3a"/>
<rect x="136.28" y="762" width="1.2" height="19.5" fill="#505050"/>
<rect x="136.28" y="111" width="1.2" height="10" fill="#505050"/>
<rect x="155.05" y="767" width="1.2" height="9.6" fill="#3a3a3a"/>
<rect x="155.05" y="111" width="1.2" height="5" fill="#3a3a3a"/>
<rect x="173.82" y="767" width="1.2" height="9.6" fill="#3a3a3a"/>
<rect x="173.82" y="111" width="1.2" height="5" fill="#3a3a3a"/>
<rect x="192.60" y="767" width="1.2" height="9.6" fill="#3a3a3a"/>
<rect x="192.60" y="111" width="1.2" height="5" fill="#3a3a3a"/>
<rect x="211.38" y="767" width="1.2" height="9.6" fill="#3a3a3a"/>
<rect x="211.38" y="111" width="1.2" height="5" fill="#3a3a3a"/>
<rect x="230.15" y="762" width="1.2" height="19.5" fill="#505050"/>
<rect x="230.15" y="111" width="1.2" height="10" fill="#505050"/>
<rect x="248.92" y="767" width="1.2" height="9.6" fill="#3a3a3a"/>
<rect x="248.92" y="111" width="1.2" height="5" fill="#3a3a3a"/>
<rect x="267.70" y="767" width="1.2" height="9.6" fill="#3a3a3a"/>
<rect x="267.70" y="111" width="1.2" height="5" fill="#3a3a3a"/>
<rect x="286.47" y="767" width="1.2" height="9.6" fill="#3a3a3a"/>
<rect x="286.47" y="111" width="1.2" height="5" fill="#3a3a3a"/>
<rect x="305.25" y="767" width="1.2" height="9.6" fill="#3a3a3a"/>
<rect x="305.25" y="111" width="1.2" height="5" fill="#3a3a3a"/>
<rect x="324.02" y="762" width="1.2" height="19.5" fill="#505050"/>
<rect x="324.02" y="111" width="1.2" height="10" fill="#505050"/>
<rect x="342.80" y="767" width="1.2" height="9.6" fill="#3a3a3a"/>
<rect x="342.80" y="111" width="1.2" height="5" fill="#3a3a3a"/>
<rect x="361.57" y="767" width="1.2" height="9.6" fill="#3a3a3a"/>
<rect x="361.57" y="111" width="1.2" height="5" fill="#3a3a3a"/>
<rect x="380.35" y="767" width="1.2" height="9.6" fill="#3a3a3a"/>
<rect x="380.35" y="111" width="1.2" height="5" fill="#3a3a3a"/>
<rect x="399.12" y="767" width="1.2" height="9.6" fill="#3a3a3a"/>
<rect x="399.12" y="111" width="1.2" height="5" fill="#3a3a3a"/>
<rect x="417.90" y="762" width="1.2" height="19.5" fill="#505050"/>
<rect x="417.90" y="111" width="1.2" height="10" fill="#505050"/>
<rect x="436.67" y="767" width="1.2" height="9.6" fill="#3a3a3a"/>
<rect x="436.67" y="111" width="1.2" height="5" fill="#3a3a3a"/>
<rect x="455.45" y="767" width="1.2" height="9.6" fill="#3a3a3a"/>
<rect x="455.45" y="111" width="1.2" height="5" fill="#3a3a3a"/>
<rect x="474.22" y="767" width="1.2" height="9.6" fill="#3a3a3a"/>
<rect x="474.22" y="111" width="1.2" height="5" fill="#3a3a3a"/>
<rect x="493.00" y="767" width="1.2" height="9.6" fill="#3a3a3a"/>
<rect x="493.00" y="111" width="1.2" height="5" fill="#3a3a3a"/>
<rect x="511.77" y="762" width="1.2" height="19.5" fill="#505050"/>
<rect x="511.77" y="111" width="1.2" height="10" fill="#505050"/>
<rect x="530.55" y="767" width="1.2" height="9.6" fill="#3a3a3a"/>
<rect x="530.55" y="111" width="1.2" height="5" fill="#3a3a3a"/>
<rect x="549.32" y="767" width="1.2" height="9.6" fill="#3a3a3a"/>
<rect x="549.32" y="111" width="1.2" height="5" fill="#3a3a3a"/>
<rect x="568.10" y="767" width="1.2" height="9.6" fill="#3a3a3a"/>
<rect x="568.10" y="111" width="1.2" height="5" fill="#3a3a3a"/>
<rect x="586.87" y="767" width="1.2" height="9.6" fill="#3a3a3a"/>
<rect x="586.87" y="111" width="1.2" height="5" fill="#3a3a3a"/>
<rect x="605.65" y="762" width="1.2" height="19.5" fill="#505050"/>
<rect x="605.65" y="111" width="1.2" height="10" fill="#505050"/>
<rect x="624.42" y="767" width="1.2" height="9.6" fill="#3a3a3a"/>
<rect x="624.42" y="111" width="1.2" height="5" fill="#3a3a3a"/>
<rect x="643.20" y="767" width="1.2" height="9.6" fill="#3a3a3a"/>
<rect x="643.20" y="111" width="1.2" height="5" fill="#3a3a3a"/>
<rect x="661.97" y="767" width="1.2" height="9.6" fill="#3a3a3a"/>
<rect x="661.97" y="111" width="1.2" height="5" fill="#3a3a3a"/>
<rect x="680.75" y="767" width="1.2" height="9.6" fill="#3a3a3a"/>
<rect x="680.75" y="111" width="1.2" height="5" fill="#3a3a3a"/>
<rect x="699.52" y="762" width="1.2" height="19.5" fill="#505050"/>
<rect x="699.52" y="111" width="1.2" height="10" fill="#505050"/>
<rect x="718.30" y="767" width="1.2" height="9.6" fill="#3a3a3a"/>
<rect x="718.30" y="111" width="1.2" height="5" fill="#3a3a3a"/>
<rect x="737.07" y="767" width="1.2" height="9.6" fill="#3a3a3a"/>
<rect x="737.07" y="111" width="1.2" height="5" fill="#3a3a3a"/>
<rect x="755.85" y="767" width="1.2" height="9.6" fill="#3a3a3a"/>
<rect x="755.85" y="111" width="1.2" height="5" fill="#3a3a3a"/>
<rect x="774.62" y="767" width="1.2" height="9.6" fill="#3a3a3a"/>
<rect x="774.62" y="111" width="1.2" height="5" fill="#3a3a3a"/>
<rect x="793.40" y="762" width="1.2" height="19.5" fill="#505050"/>
<rect x="793.40" y="111" width="1.2" height="10" fill="#505050"/>
<rect x="812.17" y="767" width="1.2" height="9.6" fill="#3a3a3a"/>
<rect x="812.17" y="111" width="1.2" height="5" fill="#3a3a3a"/>
<rect x="830.95" y="767" width="1.2" height="9.6" fill="#3a3a3a"/>
<rect x="830.95" y="111" width="1.2" height="5" fill="#3a3a3a"/>
<rect x="849.72" y="767" width="1.2" height="9.6" fill="#3a3a3a"/>
<rect x="849.72" y="111" width="1.2" height="5" fill="#3a3a3a"/>
<rect x="868.50" y="767" width="1.2" height="9.6" fill="#3a3a3a"/>
<rect x="868.50" y="111" width="1.2" height="5" fill="#3a3a3a"/>
<rect x="887.27" y="762" width="1.2" height="19.5" fill="#505050"/>
<rect x="887.27" y="111" width="1.2" height="10" fill="#505050"/>
<rect x="906.05" y="767" width="1.2" height="9.6" fill="#3a3a3a"/>
<rect x="906.05" y="111" width="1.2" height="5" fill="#3a3a3a"/>
<rect x="924.82" y="767" width="1.2" height="9.6" fill="#3a3a3a"/>
<rect x="924.82" y="111" width="1.2" height="5" fill="#3a3a3a"/>
<rect x="943.60" y="767" width="1.2" height="9.6" fill="#3a3a3a"/>
<rect x="943.60" y="111" width="1.2" height="5" fill="#3a3a3a"/>
<rect x="962.37" y="767" width="1.2" height="9.6" fill="#3a3a3a"/>
<rect x="962.37" y="111" width="1.2" height="5" fill="#3a3a3a"/>
<rect x="981.15" y="762" width="1.2" height="19.5" fill="#505050"/>
<rect x="981.15" y="111" width="1.2" height="10" fill="#505050"/>
<rect x="999.92" y="767" width="1.2" height="9.6" fill="#3a3a3a"/>
<rect x="999.92" y="111" width="1.2" height="5" fill="#3a3a3a"/>
<rect x="1018.70" y="767" width="1.2" height="9.6" fill="#3a3a3a"/>
<rect x="1018.70" y="111" width="1.2" height="5" fill="#3a3a3a"/>
<rect x="1037.47" y="767" width="1.2" height="9.6" fill="#3a3a3a"/>
<rect x="1037.47" y="111" width="1.2" height="5" fill="#3a3a3a"/>
<rect x="1056.25" y="767" width="1.2" height="9.6" fill="#3a3a3a"/>
<rect x="1056.25" y="111" width="1.2" height="5" fill="#3a3a3a"/>
<rect x="1075.03" y="762" width="1.2" height="19.5" fill="#505050"/>
<rect x="1075.03" y="111" width="1.2" height="10" fill="#505050"/>
<rect x="36" y="770.95" width="14.3" height="1.5" fill="#3a3a3a"/>
<rect x="1068.7" y="770.85" width="7.5" height="1.3" fill="#3a3a3a"/>
<rect x="39.3" y="743.38" width="7" height="1.2" fill="#3a3a3a"/>
<rect x="1072.5" y="743.38" width="3.7" height="1.2" fill="#3a3a3a"/>
<rect x="39.3" y="715.86" width="7" height="1.2" fill="#3a3a3a"/>
<rect x="1072.5" y="715.86" width="3.7" height="1.2" fill="#3a3a3a"/>
<rect x="39.3" y="688.34" width="7" height="1.2" fill="#3a3a3a"/>
<rect x="1072.5" y="688.34" width="3.7" height="1.2" fill="#3a3a3a"/>
<rect x="36" y="660.87" width="14.3" height="1.5" fill="#3a3a3a"/>
<rect x="1068.7" y="660.77" width="7.5" height="1.3" fill="#3a3a3a"/>
<rect x="39.3" y="633.30" width="7" height="1.2" fill="#3a3a3a"/>
<rect x="1072.5" y="633.30" width="3.7" height="1.2" fill="#3a3a3a"/>
<rect x="39.3" y="605.78" width="7" height="1.2" fill="#3a3a3a"/>
<rect x="1072.5" y="605.78" width="3.7" height="1.2" fill="#3a3a3a"/>
<rect x="39.3" y="578.26" width="7" height="1.2" fill="#3a3a3a"/>
<rect x="1072.5" y="578.26" width="3.7" height="1.2" fill="#3a3a3a"/>
<rect x="36" y="550.79" width="14.3" height="1.5" fill="#3a3a3a"/>
<rect x="1068.7" y="550.69" width="7.5" height="1.3" fill="#3a3a3a"/>
<rect x="39.3" y="523.22" width="7" height="1.2" fill="#3a3a3a"/>
<rect x="1072.5" y="523.22" width="3.7" height="1.2" fill="#3a3a3a"/>
<rect x="39.3" y="495.70" width="7" height="1.2" fill="#3a3a3a"/>
<rect x="1072.5" y="495.70" width="3.7" height="1.2" fill="#3a3a3a"/>
<rect x="39.3" y="468.18" width="7" height="1.2" fill="#3a3a3a"/>
<rect x="1072.5" y="468.18" width="3.7" height="1.2" fill="#3a3a3a"/>
<rect x="36" y="440.71" width="14.3" height="1.5" fill="#3a3a3a"/>
<rect x="1068.7" y="440.61" width="7.5" height="1.3" fill="#3a3a3a"/>
<rect x="39.3" y="413.14" width="7" height="1.2" fill="#3a3a3a"/>
<rect x="1072.5" y="413.14" width="3.7" height="1.2" fill="#3a3a3a"/>
<rect x="39.3" y="385.62" width="7" height="1.2" fill="#3a3a3a"/>
<rect x="1072.5" y="385.62" width="3.7" height="1.2" fill="#3a3a3a"/>
<rect x="39.3" y="358.10" width="7" height="1.2" fill="#3a3a3a"/>
<rect x="1072.5" y="358.10" width="3.7" height="1.2" fill="#3a3a3a"/>
<rect x="36" y="330.63" width="14.3" height="1.5" fill="#3a3a3a"/>
<rect x="1068.7" y="330.53" width="7.5" height="1.3" fill="#3a3a3a"/>
<rect x="39.3" y="303.06" width="7" height="1.2" fill="#3a3a3a"/>
<rect x="1072.5" y="303.06" width="3.7" height="1.2" fill="#3a3a3a"/>
<rect x="39.3" y="275.54" width="7" height="1.2" fill="#3a3a3a"/>
<rect x="1072.5" y="275.54" width="3.7" height="1.2" fill="#3a3a3a"/>
<rect x="39.3" y="248.02" width="7" height="1.2" fill="#3a3a3a"/>
<rect x="1072.5" y="248.02" width="3.7" height="1.2" fill="#3a3a3a"/>
<rect x="36" y="220.55" width="14.3" height="1.5" fill="#3a3a3a"/>
<rect x="1068.7" y="220.45" width="7.5" height="1.3" fill="#3a3a3a"/>
<rect x="39.3" y="192.98" width="7" height="1.2" fill="#3a3a3a"/>
<rect x="1072.5" y="192.98" width="3.7" height="1.2" fill="#3a3a3a"/>
<rect x="39.3" y="165.46" width="7" height="1.2" fill="#3a3a3a"/>
<rect x="1072.5" y="165.46" width="3.7" height="1.2" fill="#3a3a3a"/>
<rect x="39.3" y="137.94" width="7" height="1.2" fill="#3a3a3a"/>
<rect x="1072.5" y="137.94" width="3.7" height="1.2" fill="#3a3a3a"/>
<rect x="36" y="110.47" width="14.3" height="1.5" fill="#3a3a3a"/>
<rect x="1068.7" y="110.37" width="7.5" height="1.3" fill="#3a3a3a"/>
<rect x="655.1" y="617" width="1.7" height="20.5" fill="#1a1a2a"/>
<rect x="648.1" y="626.4" width="15.5" height="1.7" fill="#1a1a2a"/>
</svg>
<div class="a" style="left:18.5px;top:771.5px;width:60px;height:20px;transform:translate(-30px,-10px) rotate(90deg) scaleX(1.29);text-align:center;font-size:20.7px;line-height:20px;color:#000;font-family:'Liberation Sans',sans-serif">0</div>
<div class="a" style="left:18.5px;top:661.4px;width:60px;height:20px;transform:translate(-30px,-10px) rotate(90deg) scaleX(1.29);text-align:center;font-size:20.7px;line-height:20px;color:#000;font-family:'Liberation Sans',sans-serif">20</div>
<div class="a" style="left:18.5px;top:551.3px;width:60px;height:20px;transform:translate(-30px,-10px) rotate(90deg) scaleX(1.29);text-align:center;font-size:20.7px;line-height:20px;color:#000;font-family:'Liberation Sans',sans-serif">40</div>
<div class="a" style="left:18.5px;top:441.3px;width:60px;height:20px;transform:translate(-30px,-10px) rotate(90deg) scaleX(1.29);text-align:center;font-size:20.7px;line-height:20px;color:#000;font-family:'Liberation Sans',sans-serif">60</div>
<div class="a" style="left:18.5px;top:331.2px;width:60px;height:20px;transform:translate(-30px,-10px) rotate(90deg) scaleX(1.29);text-align:center;font-size:20.7px;line-height:20px;color:#000;font-family:'Liberation Sans',sans-serif">80</div>
<div class="a" style="left:18.5px;top:221.1px;width:60px;height:20px;transform:translate(-30px,-10px) rotate(90deg) scaleX(1.29);text-align:center;font-size:20.7px;line-height:20px;color:#000;font-family:'Liberation Sans',sans-serif">100</div>
<div class="a" style="left:18.5px;top:111.0px;width:60px;height:20px;transform:translate(-30px,-10px) rotate(90deg) scaleX(1.29);text-align:center;font-size:20.7px;line-height:20px;color:#000;font-family:'Liberation Sans',sans-serif">120</div>
<div class="a" style="left:1086px;top:58px;width:1px;height:708px;background:#d9d9d9"></div>
<div class="a" style="left:1087px;top:58px;width:1px;height:708px;background:#fafafa"></div>
<div class="a" style="left:1086px;top:765px;width:114px;height:1px;background:#d9d9d9"></div>
<div class="t" style="left:1092.70px;top:54.90px;font-size:9.20px;line-height:9.20px;color:#3535b8;font-weight:normal;font-style:normal;font-family:'Liberation Sans', sans-serif;transform:scaleX(0.7428);-webkit-text-stroke:0.35px #3535b8;letter-spacing:0.00px;">Transponder [DS]</div>
<div class="t" style="left:1091.90px;top:81.90px;font-size:10.20px;line-height:10.20px;color:#484848;font-weight:normal;font-style:normal;font-family:'Liberation Sans', sans-serif;transform:scaleX(0.6375);-webkit-text-stroke:0.30px #484848;letter-spacing:0.60px;">Frequency:</div>
<div class="t" style="left:1142.20px;top:81.90px;font-size:10.20px;line-height:10.20px;color:#2b8f33;font-weight:normal;font-style:normal;font-family:'Liberation Sans', sans-serif;transform:scaleX(0.6347);-webkit-text-stroke:0.55px #2b8f33;letter-spacing:0.50px;">12149,247 MHz</div>
<div class="t" style="left:1091.90px;top:118.90px;font-size:10.20px;line-height:10.20px;color:#484848;font-weight:normal;font-style:normal;font-family:'Liberation Sans', sans-serif;transform:scaleX(0.6200);-webkit-text-stroke:0.30px #484848;letter-spacing:0.60px;">Polarization:</div>
<div class="t" style="left:1142.20px;top:118.90px;font-size:10.20px;line-height:10.20px;color:#2b8f33;font-weight:normal;font-style:normal;font-family:'Liberation Sans', sans-serif;transform:scaleX(0.6340);-webkit-text-stroke:0.55px #2b8f33;letter-spacing:0.50px;">Vertical</div>
<div class="t" style="left:1091.90px;top:155.90px;font-size:10.20px;line-height:10.20px;color:#484848;font-weight:normal;font-style:normal;font-family:'Liberation Sans', sans-serif;transform:scaleX(0.6187);-webkit-text-stroke:0.30px #484848;letter-spacing:0.60px;">Symbol Rate:</div>
<div class="t" style="left:1142.20px;top:155.90px;font-size:10.20px;line-height:10.20px;color:#2b8f33;font-weight:normal;font-style:normal;font-family:'Liberation Sans', sans-serif;transform:scaleX(0.6210);-webkit-text-stroke:0.55px #2b8f33;letter-spacing:0.50px;">31396,831 KS/s</div>
<div class="t" style="left:1091.90px;top:192.90px;font-size:10.20px;line-height:10.20px;color:#484848;font-weight:normal;font-style:normal;font-family:'Liberation Sans', sans-serif;transform:scaleX(0.6501);-webkit-text-stroke:0.30px #484848;letter-spacing:0.60px;">Standard:</div>
<div class="t" style="left:1142.20px;top:192.90px;font-size:10.20px;line-height:10.20px;color:#2b8f33;font-weight:normal;font-style:normal;font-family:'Liberation Sans', sans-serif;transform:scaleX(0.5980);-webkit-text-stroke:0.55px #2b8f33;letter-spacing:0.50px;">DVB-S2</div>
<div class="t" style="left:1091.90px;top:228.90px;font-size:10.20px;line-height:10.20px;color:#484848;font-weight:normal;font-style:normal;font-family:'Liberation Sans', sans-serif;transform:scaleX(0.6968);-webkit-text-stroke:0.30px #484848;letter-spacing:0.60px;">Modulation:</div>
<div class="t" style="left:1142.20px;top:228.90px;font-size:10.20px;line-height:10.20px;color:#2b8f33;font-weight:normal;font-style:normal;font-family:'Liberation Sans', sans-serif;transform:scaleX(0.6017);-webkit-text-stroke:0.55px #2b8f33;letter-spacing:0.50px;">8PSK</div>
<div class="t" style="left:1091.90px;top:265.90px;font-size:10.20px;line-height:10.20px;color:#484848;font-weight:normal;font-style:normal;font-family:'Liberation Sans', sans-serif;transform:scaleX(0.5791);-webkit-text-stroke:0.30px #484848;letter-spacing:0.60px;">FEC:</div>
<div class="t" style="left:1142.20px;top:265.90px;font-size:10.20px;line-height:10.20px;color:#2b8f33;font-weight:normal;font-style:normal;font-family:'Liberation Sans', sans-serif;transform:scaleX(0.6776);-webkit-text-stroke:0.55px #2b8f33;letter-spacing:0.50px;">2/3</div>
<div class="t" style="left:1091.90px;top:302.90px;font-size:10.20px;line-height:10.20px;color:#484848;font-weight:normal;font-style:normal;font-family:'Liberation Sans', sans-serif;transform:scaleX(0.6200);-webkit-text-stroke:0.30px #484848;letter-spacing:0.60px;">RollOff:</div>
<div class="t" style="left:1142.20px;top:302.90px;font-size:10.20px;line-height:10.20px;color:#2b8f33;font-weight:normal;font-style:normal;font-family:'Liberation Sans', sans-serif;transform:scaleX(0.6340);-webkit-text-stroke:0.55px #2b8f33;letter-spacing:0.50px;">0.20</div>
<div class="t" style="left:1091.90px;top:339.90px;font-size:10.20px;line-height:10.20px;color:#484848;font-weight:normal;font-style:normal;font-family:'Liberation Sans', sans-serif;transform:scaleX(0.6200);-webkit-text-stroke:0.30px #484848;letter-spacing:0.60px;">Pilot:</div>
<div class="t" style="left:1142.20px;top:339.90px;font-size:10.20px;line-height:10.20px;color:#2b8f33;font-weight:normal;font-style:normal;font-family:'Liberation Sans', sans-serif;transform:scaleX(0.6340);-webkit-text-stroke:0.55px #2b8f33;letter-spacing:0.50px;">ON</div>
<div class="t" style="left:1091.90px;top:376.90px;font-size:10.20px;line-height:10.20px;color:#484848;font-weight:normal;font-style:normal;font-family:'Liberation Sans', sans-serif;transform:scaleX(0.6200);-webkit-text-stroke:0.30px #484848;letter-spacing:0.60px;">Spectrum:</div>
<div class="t" style="left:1142.20px;top:376.90px;font-size:10.20px;line-height:10.20px;color:#2b8f33;font-weight:normal;font-style:normal;font-family:'Liberation Sans', sans-serif;transform:scaleX(0.6340);-webkit-text-stroke:0.55px #2b8f33;letter-spacing:0.50px;">Inverted</div>
<div class="t" style="left:1091.90px;top:413.90px;font-size:10.20px;line-height:10.20px;color:#484848;font-weight:normal;font-style:normal;font-family:'Liberation Sans', sans-serif;transform:scaleX(0.6200);-webkit-text-stroke:0.30px #484848;letter-spacing:0.60px;">Frame Type:</div>
<div class="t" style="left:1142.20px;top:413.90px;font-size:10.20px;line-height:10.20px;color:#2b8f33;font-weight:normal;font-style:normal;font-family:'Liberation Sans', sans-serif;transform:scaleX(0.6340);-webkit-text-stroke:0.55px #2b8f33;letter-spacing:0.50px;">Long Frame</div>
<div class="t" style="left:1091.90px;top:450.90px;font-size:10.20px;line-height:10.20px;color:#484848;font-weight:normal;font-style:normal;font-family:'Liberation Sans', sans-serif;transform:scaleX(0.6200);-webkit-text-stroke:0.30px #484848;letter-spacing:0.60px;">Code Mode:</div>
<div class="t" style="left:1142.20px;top:450.90px;font-size:10.20px;line-height:10.20px;color:#2b8f33;font-weight:normal;font-style:normal;font-family:'Liberation Sans', sans-serif;transform:scaleX(0.6340);-webkit-text-stroke:0.55px #2b8f33;letter-spacing:0.50px;">CCM</div>
<div class="t" style="left:1091.90px;top:486.90px;font-size:10.20px;line-height:10.20px;color:#484848;font-weight:normal;font-style:normal;font-family:'Liberation Sans', sans-serif;transform:scaleX(0.6200);-webkit-text-stroke:0.30px #484848;letter-spacing:0.60px;">Stream type:</div>
<div class="t" style="left:1142.20px;top:486.90px;font-size:10.20px;line-height:10.20px;color:#2b8f33;font-weight:normal;font-style:normal;font-family:'Liberation Sans', sans-serif;transform:scaleX(0.6340);-webkit-text-stroke:0.55px #2b8f33;letter-spacing:0.50px;">Transport</div>
<div class="t" style="left:1091.90px;top:523.90px;font-size:10.20px;line-height:10.20px;color:#484848;font-weight:normal;font-style:normal;font-family:'Liberation Sans', sans-serif;transform:scaleX(0.6200);-webkit-text-stroke:0.30px #484848;letter-spacing:0.60px;">ISSYI</div>
<div class="t" style="left:1142.20px;top:523.90px;font-size:10.20px;line-height:10.20px;color:#2b8f33;font-weight:normal;font-style:normal;font-family:'Liberation Sans', sans-serif;transform:scaleX(0.6340);-webkit-text-stroke:0.55px #2b8f33;letter-spacing:0.50px;">ON</div>
<div class="t" style="left:1091.90px;top:560.90px;font-size:10.20px;line-height:10.20px;color:#484848;font-weight:normal;font-style:normal;font-family:'Liberation Sans', sans-serif;transform:scaleX(0.6200);-webkit-text-stroke:0.30px #484848;letter-spacing:0.60px;">NPD:</div>
<div class="t" style="left:1142.20px;top:560.90px;font-size:10.20px;line-height:10.20px;color:#2b8f33;font-weight:normal;font-style:normal;font-family:'Liberation Sans', sans-serif;transform:scaleX(0.6340);-webkit-text-stroke:0.55px #2b8f33;letter-spacing:0.50px;">OFF</div>
<div class="t" style="left:1091.90px;top:597.90px;font-size:10.20px;line-height:10.20px;color:#484848;font-weight:normal;font-style:normal;font-family:'Liberation Sans', sans-serif;transform:scaleX(0.6200);-webkit-text-stroke:0.30px #484848;letter-spacing:0.60px;">RF Level:</div>
<div class="t" style="left:1142.20px;top:597.90px;font-size:10.20px;line-height:10.20px;color:#2b8f33;font-weight:normal;font-style:normal;font-family:'Liberation Sans', sans-serif;transform:scaleX(0.6340);-webkit-text-stroke:0.55px #2b8f33;letter-spacing:0.50px;">-45 dBm</div>
<div class="t" style="left:1091.90px;top:634.90px;font-size:10.20px;line-height:10.20px;color:#484848;font-weight:normal;font-style:normal;font-family:'Liberation Sans', sans-serif;transform:scaleX(0.6200);-webkit-text-stroke:0.30px #484848;letter-spacing:0.60px;">BitRate:</div>
<div class="t" style="left:1142.20px;top:634.90px;font-size:10.20px;line-height:10.20px;color:#2b8f33;font-weight:normal;font-style:normal;font-family:'Liberation Sans', sans-serif;transform:scaleX(0.6340);-webkit-text-stroke:0.55px #2b8f33;letter-spacing:0.50px;">62,195 Mbit/s</div>
<div class="t" style="left:1091.90px;top:671.90px;font-size:10.20px;line-height:10.20px;color:#484848;font-weight:normal;font-style:normal;font-family:'Liberation Sans', sans-serif;transform:scaleX(0.6200);-webkit-text-stroke:0.30px #484848;letter-spacing:0.60px;">CarrierWidth:</div>
<div class="t" style="left:1142.20px;top:671.90px;font-size:10.20px;line-height:10.20px;color:#2b8f33;font-weight:normal;font-style:normal;font-family:'Liberation Sans', sans-serif;transform:scaleX(0.6340);-webkit-text-stroke:0.55px #2b8f33;letter-spacing:0.50px;">37,676 MHz</div>
<div class="t" style="left:1091.90px;top:723.90px;font-size:10.20px;line-height:10.20px;color:#484848;font-weight:normal;font-style:normal;font-family:'Liberation Sans', sans-serif;transform:scaleX(0.6200);-webkit-text-stroke:0.30px #484848;letter-spacing:0.60px;">MIS (2):</div>
<div class="a" style="left:1142.2px;top:719.2px;width:47.6px;height:17.5px;background:#e5e5e5;border:1px solid #acacac"></div>
<div class="t" style="left:1145.50px;top:724.25px;font-size:9.50px;line-height:9.50px;color:#222;font-weight:normal;font-style:normal;font-family:'Liberation Sans', sans-serif;transform:scaleX(0.7800);-webkit-text-stroke:0.25px #222;letter-spacing:0.00px;">1</div>
<svg class="a" style="left:1180px;top:724px" width="10" height="8"><polyline points="1,1.5 4.5,5 8,1.5" fill="none" stroke="#505050" stroke-width="1.1"/></svg>
<div class="a" style="left:1087px;top:773px;width:120px;height:22px;background:#e1e1e1;border:1px solid #adadad"></div>
<svg class="a" style="left:1138px;top:776px" width="13" height="16"><rect x="1" y="1" width="10" height="13" rx="1" fill="#f8f8f8" stroke="#9a9a9a" stroke-width="1"/><rect x="1.5" y="4.5" width="9" height="2" fill="#3a86d8"/><line x1="1.5" y1="8.5" x2="10.5" y2="8.5" stroke="#9a9a9a"/><line x1="1.5" y1="11.5" x2="10.5" y2="11.5" stroke="#b0b0b0"/></svg>
<div class="a" style="left:0.5px;top:804.4px;width:79.5px;height:16.4px;border:1px solid #b9b9b9;border-radius:1.5px;background:#e6e6e6;overflow:hidden"><div class="a" style="left:-1.0px;top:0;width:79.5px;height:100%;background:linear-gradient(#e2fbe2 0%,#dcf8dc 51%,#8fd98f 55%,#a8eda8 100%)"></div></div>
<div class="a" style="left:0.5px;top:824.5px;width:79.5px;height:16.9px;border:1px solid #b9b9b9;border-radius:1.5px;background:#e6e6e6;overflow:hidden"><div class="a" style="left:-1.0px;top:0;width:79.5px;height:100%;background:linear-gradient(#e2fbe2 0%,#dcf8dc 51%,#8fd98f 55%,#a8eda8 100%)"></div></div>
<div class="a" style="left:83.0px;top:804.4px;width:515.0px;height:16.4px;border:1px solid #b9b9b9;border-radius:1.5px;background:#e6e6e6;overflow:hidden"><div class="a" style="left:-1.0px;top:0;width:52.0px;height:100%;background:linear-gradient(#fff0f0 0%,#ffe8e8 51%,#d8a8a8 55%,#f2c6c6 100%)"></div><div class="a" style="left:51.0px;top:0;width:206.0px;height:100%;background:linear-gradient(#fffee6 0%,#fffddc 51%,#d8d488 55%,#f4f29c 100%)"></div><div class="a" style="left:257.0px;top:0;width:51.6px;height:100%;background:linear-gradient(#e2fbe2 0%,#dcf8dc 51%,#8fd98f 55%,#a8eda8 100%)"></div><div class="a" style="left:308.6px;top:0;width:205.4px;height:100%;background:linear-gradient(#ececec 0%,#e6e6e6 51%,#cfcfcf 55%,#dcdcdc 100%)"></div></div>
<div class="a" style="left:83.0px;top:824.5px;width:515.0px;height:16.9px;border:1px solid #b9b9b9;border-radius:1.5px;background:#e6e6e6;overflow:hidden"><div class="a" style="left:-1.0px;top:0;width:52.0px;height:100%;background:linear-gradient(#fff0f0 0%,#ffe8e8 51%,#d8a8a8 55%,#f2c6c6 100%)"></div><div class="a" style="left:51.0px;top:0;width:206.0px;height:100%;background:linear-gradient(#fffee6 0%,#fffddc 51%,#d8d488 55%,#f4f29c 100%)"></div><div class="a" style="left:257.0px;top:0;width:257.0px;height:100%;background:linear-gradient(#e2fbe2 0%,#dcf8dc 51%,#8fd98f 55%,#a8eda8 100%)"></div></div>
<div class="a" style="left:601.0px;top:804.4px;width:516.0px;height:16.4px;border:1px solid #b9b9b9;border-radius:1.5px;background:#e6e6e6;overflow:hidden"><div class="a" style="left:-1.0px;top:0;width:112.0px;height:100%;background:linear-gradient(#fff0f0 0%,#ffe8e8 51%,#d8a8a8 55%,#f2c6c6 100%)"></div><div class="a" style="left:111.0px;top:0;width:184.0px;height:100%;background:linear-gradient(#fffee6 0%,#fffddc 51%,#d8d488 55%,#f4f29c 100%)"></div><div class="a" style="left:295.0px;top:0;width:220.0px;height:100%;background:linear-gradient(#e2fbe2 0%,#dcf8dc 51%,#8fd98f 55%,#a8eda8 100%)"></div></div>
<div class="a" style="left:601.0px;top:824.5px;width:516.0px;height:16.9px;border:1px solid #b9b9b9;border-radius:1.5px;background:#e6e6e6;overflow:hidden"><div class="a" style="left:-1.0px;top:0;width:171.0px;height:100%;background:linear-gradient(#fff0f0 0%,#ffe8e8 51%,#d8a8a8 55%,#f2c6c6 100%)"></div><div class="a" style="left:170.0px;top:0;width:129.0px;height:100%;background:linear-gradient(#fffee6 0%,#fffddc 51%,#d8d488 55%,#f4f29c 100%)"></div><div class="a" style="left:299.0px;top:0;width:12.0px;height:100%;background:linear-gradient(#e2fbe2 0%,#dcf8dc 51%,#8fd98f 55%,#a8eda8 100%)"></div><div class="a" style="left:311.0px;top:0;width:204.0px;height:100%;background:linear-gradient(#ececec 0%,#e6e6e6 51%,#cfcfcf 55%,#dcdcdc 100%)"></div></div>
<div class="a" style="left:1120.7px;top:804.4px;width:89.3px;height:16.4px;border:1px solid #b9b9b9;border-radius:1.5px;background:#e6e6e6;overflow:hidden"><div class="a" style="left:-1.0px;top:0;width:89.3px;height:100%;background:linear-gradient(#e2fbe2 0%,#dcf8dc 51%,#8fd98f 55%,#a8eda8 100%)"></div></div>
<div class="a" style="left:1120.7px;top:824.5px;width:89.3px;height:16.9px;border:1px solid #b9b9b9;border-radius:1.5px;background:#e6e6e6;overflow:hidden"><div class="a" style="left:-1.0px;top:0;width:89.3px;height:100%;background:linear-gradient(#e2fbe2 0%,#dcf8dc 51%,#8fd98f 55%,#a8eda8 100%)"></div></div>
<div class="t" style="left:1.75px;top:809.20px;font-size:9.60px;line-height:9.60px;color:#1a1a1a;font-weight:normal;font-style:normal;font-family:'Liberation Sans', sans-serif;transform:scaleX(0.6578);-webkit-text-stroke:0.25px #1a1a1a;letter-spacing:0.35px;">Present</div>
<div class="t" style="left:1.75px;top:829.20px;font-size:9.60px;line-height:9.60px;color:#1a1a1a;font-weight:normal;font-style:normal;font-family:'Liberation Sans', sans-serif;transform:scaleX(0.6669);-webkit-text-stroke:0.25px #1a1a1a;letter-spacing:0.35px;">Lock</div>
<div class="t" style="left:86.30px;top:809.20px;font-size:9.60px;line-height:9.60px;color:#1a1a1a;font-weight:normal;font-style:normal;font-family:'Liberation Sans', sans-serif;transform:scaleX(0.6636);-webkit-text-stroke:0.25px #1a1a1a;letter-spacing:0.35px;">Level: 60%</div>
<div class="t" style="left:86.30px;top:829.20px;font-size:9.60px;line-height:9.60px;color:#1a1a1a;font-weight:normal;font-style:normal;font-family:'Liberation Sans', sans-serif;transform:scaleX(0.6615);-webkit-text-stroke:0.25px #1a1a1a;letter-spacing:0.35px;">Quality: 100%</div>
<div class="t" style="left:603.30px;top:809.20px;font-size:9.60px;line-height:9.60px;color:#1a1a1a;font-weight:normal;font-style:normal;font-family:'Liberation Sans', sans-serif;transform:scaleX(0.6566);-webkit-text-stroke:0.25px #1a1a1a;letter-spacing:0.35px;">BER: 0,0000000</div>
<div class="t" style="left:604.00px;top:829.20px;font-size:9.60px;line-height:9.60px;color:#1a1a1a;font-weight:normal;font-style:normal;font-family:'Liberation Sans', sans-serif;transform:scaleX(0.6700);-webkit-text-stroke:0.25px #1a1a1a;letter-spacing:0.35px;">SNR: 12,1 dB (Margin: 5,5 dB | OK)</div>
<div class="t" style="left:1121.70px;top:809.20px;font-size:9.60px;line-height:9.60px;color:#1a1a1a;font-weight:normal;font-style:normal;font-family:'Liberation Sans', sans-serif;transform:scaleX(0.7047);-webkit-text-stroke:0.25px #1a1a1a;letter-spacing:0.35px;">Input (~21,39 Mbps)</div>
<div class="t" style="left:1121.70px;top:829.20px;font-size:9.60px;line-height:9.60px;color:#1a1a1a;font-weight:normal;font-style:normal;font-family:'Liberation Sans', sans-serif;transform:scaleX(0.6402);-webkit-text-stroke:0.25px #1a1a1a;letter-spacing:0.35px;">Sync TS</div>
<div class="a" style="left:0;top:846.8px;width:1200px;height:1px;background:#d6d6d6"></div>
<div class="a" style="left:0;top:847.8px;width:1200px;height:1px;background:#fbfbfb"></div>
<div class="a" style="left:0;top:867.6px;width:1200px;height:1px;background:#fdfdfd"></div>
<div class="a" style="left:0;top:868.6px;width:1200px;height:1.4px;background:#b8b8b8"></div>
<div class="a" style="left:795.5px;top:849px;width:1.3px;height:16.5px;background:#c4c4c4"></div>
<div class="a" style="left:1197px;top:849px;width:1.3px;height:16.5px;background:#c4c4c4"></div>
<div class="t" style="left:146.20px;top:852.85px;font-size:11.30px;line-height:11.30px;color:#1a1a1a;font-weight:normal;font-style:normal;font-family:'Liberation Sans', sans-serif;transform:scaleX(0.6397);-webkit-text-stroke:0.25px #1a1a1a;letter-spacing:0.40px;">Locked -&gt; Uptime: 24:05:00</div>
<div class="t" style="left:555.00px;top:852.85px;font-size:11.30px;line-height:11.30px;color:#1a1a1a;font-weight:normal;font-style:normal;font-family:'Liberation Sans', sans-serif;transform:scaleX(0.5890);-webkit-text-stroke:0.25px #1a1a1a;letter-spacing:0.40px;">SYNC 33 | TEI 0 | CC 587</div>
<div class="t" style="left:931.00px;top:852.85px;font-size:11.30px;line-height:11.30px;color:#1a1a1a;font-weight:normal;font-style:normal;font-family:'Liberation Sans', sans-serif;transform:scaleX(0.6178);-webkit-text-stroke:0.25px #1a1a1a;letter-spacing:0.40px;">Best signal: 12,7 dB (2023-01-06 05:36)</div>
<div class="a" style="left:647px;top:-5px;width:560px;height:44px;background:#fff;box-shadow:-1px 2px 6px rgba(0,0,0,0.13)"></div>
<div class="a" style="left:651.0px;top:0;width:110.3px;height:14.6px;background:#f2e13a"></div>
<div class="a" style="left:651.0px;top:14.6px;width:110.3px;height:20.6px;background:linear-gradient(#a4a4a4 0,#b8b8b8 2px,#cdcdcd 5px,#e4e4e4 8px,#f2f2f2 11px,#f8f8f8 100%)"></div>
<div class="a" style="left:651.0px;top:15px;width:110.3px;height:20px;background:repeating-linear-gradient(rgba(255,255,255,.55) 0,rgba(255,255,255,.55) 1.1px,rgba(255,255,255,0) 1.1px,rgba(255,255,255,0) 2.9px)"></div>
<div class="a" style="left:761.3px;top:0;width:110.5px;height:14.6px;background:#ee1c24"></div>
<div class="a" style="left:761.3px;top:14.6px;width:110.5px;height:20.6px;background:linear-gradient(#a4a4a4 0,#b8b8b8 2px,#cdcdcd 5px,#e4e4e4 8px,#f2f2f2 11px,#f8f8f8 100%)"></div>
<div class="a" style="left:761.3px;top:15px;width:110.5px;height:20px;background:repeating-linear-gradient(rgba(255,255,255,.55) 0,rgba(255,255,255,.55) 1.1px,rgba(255,255,255,0) 1.1px,rgba(255,255,255,0) 2.9px)"></div>
<div class="a" style="left:871.8px;top:0;width:110.7px;height:14.6px;background:#24d2cc"></div>
<div class="a" style="left:871.8px;top:14.6px;width:110.7px;height:20.6px;background:linear-gradient(#a4a4a4 0,#b8b8b8 2px,#cdcdcd 5px,#e4e4e4 8px,#f2f2f2 11px,#f8f8f8 100%)"></div>
<div class="a" style="left:871.8px;top:15px;width:110.7px;height:20px;background:repeating-linear-gradient(rgba(255,255,255,.55) 0,rgba(255,255,255,.55) 1.1px,rgba(255,255,255,0) 1.1px,rgba(255,255,255,0) 2.9px)"></div>
<div class="a" style="left:982.5px;top:0;width:110.8px;height:14.6px;background:#ff8000"></div>
<div class="a" style="left:982.5px;top:14.6px;width:110.8px;height:20.6px;background:linear-gradient(#a4a4a4 0,#b8b8b8 2px,#cdcdcd 5px,#e4e4e4 8px,#f2f2f2 11px,#f8f8f8 100%)"></div>
<div class="a" style="left:982.5px;top:15px;width:110.8px;height:20px;background:repeating-linear-gradient(rgba(255,255,255,.55) 0,rgba(255,255,255,.55) 1.1px,rgba(255,255,255,0) 1.1px,rgba(255,255,255,0) 2.9px)"></div>
<div class="a" style="left:1093.3px;top:0;width:110.7px;height:14.6px;background:#8c8c8c"></div>
<div class="a" style="left:1093.3px;top:14.6px;width:110.7px;height:20.6px;background:linear-gradient(#a4a4a4 0,#b8b8b8 2px,#cdcdcd 5px,#e4e4e4 8px,#f2f2f2 11px,#f8f8f8 100%)"></div>
<div class="a" style="left:1093.3px;top:15px;width:110.7px;height:20px;background:repeating-linear-gradient(rgba(255,255,255,.55) 0,rgba(255,255,255,.55) 1.1px,rgba(255,255,255,0) 1.1px,rgba(255,255,255,0) 2.9px)"></div>
<div class="a" style="left:650.6px;top:0;width:1.2px;height:36px;background:#111"></div>
<div class="a" style="left:760.6px;top:0;width:1.5px;height:36px;background:#111"></div>
<div class="a" style="left:871.1px;top:0;width:1.5px;height:36px;background:#111"></div>
<div class="a" style="left:981.8px;top:0;width:1.5px;height:36px;background:#111"></div>
<div class="a" style="left:1092.6px;top:0;width:1.5px;height:36px;background:#111"></div>
<div class="a" style="left:650.3px;top:14.2px;width:550px;height:1.5px;background:#484848"></div>
<div class="a" style="left:650.6px;top:34.8px;width:550px;height:1.2px;background:#111"></div>
<div class="t" style="left:654.00px;top:1.05px;font-size:10.90px;line-height:10.90px;color:#1a1a00;font-weight:bold;font-style:italic;font-family:'Liberation Sans', sans-serif;transform:scaleX(0.7520);-webkit-text-stroke:0.25px #1a1a00;letter-spacing:0.00px;">Lučenec-Slovakia_R.Dávid</div>
<div class="t" style="left:764.50px;top:1.30px;font-size:9.40px;line-height:9.40px;color:#3a0000;font-weight:bold;font-style:italic;font-family:'Liberation Sans', sans-serif;transform:scaleX(0.8106);-webkit-text-stroke:0.25px #3a0000;letter-spacing:0.00px;">Berlin-Paris-Vienna-Belgrade</div>
<div class="t" style="left:907.00px;top:-0.50px;font-size:12.00px;line-height:12.00px;color:#001a1a;font-weight:bold;font-style:italic;font-family:'Liberation Sans', sans-serif;transform:scaleX(0.8645);-webkit-text-stroke:0.25px #001a1a;letter-spacing:0.00px;">Moscow</div>
<div class="t" style="left:1024.00px;top:-0.50px;font-size:12.00px;line-height:12.00px;color:#1a0a00;font-weight:bold;font-style:italic;font-family:'Liberation Sans', sans-serif;transform:scaleX(0.8382);-webkit-text-stroke:0.25px #1a0a00;letter-spacing:0.00px;">Dubai</div>
<div class="t" style="left:1130.80px;top:-0.50px;font-size:12.00px;line-height:12.00px;color:#111;font-weight:bold;font-style:italic;font-family:'Liberation Sans', sans-serif;transform:scaleX(0.8406);-webkit-text-stroke:0.25px #111;letter-spacing:0.00px;">Athens</div>
<div class="t" style="left:659.20px;top:21.55px;font-size:11.90px;line-height:11.90px;color:#1a1a1a;font-weight:bold;font-style:normal;font-family:'Liberation Sans', sans-serif;transform:scaleX(0.7149);-webkit-text-stroke:0.10px #1a1a1a;letter-spacing:0.00px;">Fri, Jan 6</div>
<div class="t" style="left:723.50px;top:21.55px;font-size:11.90px;line-height:11.90px;color:#1a1a1a;font-weight:bold;font-style:normal;font-family:'Liberation Sans', sans-serif;transform:scaleX(0.6606);-webkit-text-stroke:0.10px #1a1a1a;letter-spacing:0.00px;">18:39:12</div>
<div class="t" style="left:712.00px;top:17.20px;font-size:7.60px;line-height:7.60px;color:#111;font-weight:bold;font-style:normal;font-family:'Liberation Sans', sans-serif;transform:scaleX(0.6360);-webkit-text-stroke:0.10px #111;letter-spacing:0.00px;">+1</div>
<div class="t" style="left:769.80px;top:21.55px;font-size:11.90px;line-height:11.90px;color:#1a1a1a;font-weight:bold;font-style:normal;font-family:'Liberation Sans', sans-serif;transform:scaleX(0.7073);-webkit-text-stroke:0.10px #1a1a1a;letter-spacing:0.00px;">Fri, Jan 6</div>
<div class="t" style="left:834.00px;top:21.55px;font-size:11.90px;line-height:11.90px;color:#1a1a1a;font-weight:bold;font-style:normal;font-family:'Liberation Sans', sans-serif;transform:scaleX(0.6565);-webkit-text-stroke:0.10px #1a1a1a;letter-spacing:0.00px;">18:39:12</div>
<div class="t" style="left:822.50px;top:17.20px;font-size:7.60px;line-height:7.60px;color:#111;font-weight:bold;font-style:normal;font-family:'Liberation Sans', sans-serif;transform:scaleX(0.6360);-webkit-text-stroke:0.10px #111;letter-spacing:0.00px;">+1</div>
<div class="t" style="left:880.50px;top:21.55px;font-size:11.90px;line-height:11.90px;color:#1a1a1a;font-weight:bold;font-style:normal;font-family:'Liberation Sans', sans-serif;transform:scaleX(0.7130);-webkit-text-stroke:0.10px #1a1a1a;letter-spacing:0.00px;">Fri, Jan 6</div>
<div class="t" style="left:944.50px;top:21.55px;font-size:11.90px;line-height:11.90px;color:#1a1a1a;font-weight:bold;font-style:normal;font-family:'Liberation Sans', sans-serif;transform:scaleX(0.6565);-webkit-text-stroke:0.10px #1a1a1a;letter-spacing:0.00px;">20:39:12</div>
<div class="t" style="left:933.00px;top:17.20px;font-size:7.60px;line-height:7.60px;color:#111;font-weight:bold;font-style:normal;font-family:'Liberation Sans', sans-serif;transform:scaleX(0.7114);-webkit-text-stroke:0.10px #111;letter-spacing:0.00px;">+3</div>
<div class="t" style="left:991.00px;top:21.55px;font-size:11.90px;line-height:11.90px;color:#1a1a1a;font-weight:bold;font-style:normal;font-family:'Liberation Sans', sans-serif;transform:scaleX(0.7130);-webkit-text-stroke:0.10px #1a1a1a;letter-spacing:0.00px;">Fri, Jan 6</div>
<div class="t" style="left:1055.00px;top:21.55px;font-size:11.90px;line-height:11.90px;color:#1a1a1a;font-weight:bold;font-style:normal;font-family:'Liberation Sans', sans-serif;transform:scaleX(0.6669);-webkit-text-stroke:0.10px #1a1a1a;letter-spacing:0.00px;">21:39:12</div>
<div class="t" style="left:1044.00px;top:17.20px;font-size:7.60px;line-height:7.60px;color:#111;font-weight:bold;font-style:normal;font-family:'Liberation Sans', sans-serif;transform:scaleX(0.6360);-webkit-text-stroke:0.10px #111;letter-spacing:0.00px;">+4</div>
<div class="t" style="left:1101.50px;top:21.55px;font-size:11.90px;line-height:11.90px;color:#1a1a1a;font-weight:bold;font-style:normal;font-family:'Liberation Sans', sans-serif;transform:scaleX(0.7225);-webkit-text-stroke:0.10px #1a1a1a;letter-spacing:0.00px;">Fri, Jan 6</div>
<div class="t" style="left:1166.00px;top:21.55px;font-size:11.90px;line-height:11.90px;color:#1a1a1a;font-weight:bold;font-style:normal;font-family:'Liberation Sans', sans-serif;transform:scaleX(0.6523);-webkit-text-stroke:0.10px #1a1a1a;letter-spacing:0.00px;">19:39:12</div>
<div class="t" style="left:1154.00px;top:17.20px;font-size:7.60px;line-height:7.60px;color:#111;font-weight:bold;font-style:normal;font-family:'Liberation Sans', sans-serif;transform:scaleX(0.7114);-webkit-text-stroke:0.10px #111;letter-spacing:0.00px;">+2</div>
<div class="a" style="left:649px;top:39px;width:551px;height:19.8px;background:#f8f8f8;box-shadow:0 3px 6px rgba(0,0,0,0.13)"></div>
<div class="a" style="left:649px;top:39px;width:544px;height:19.8px;background:#000"></div>
<div class="t" style="left:649.60px;top:41.20px;font-size:11.60px;line-height:11.60px;color:#c4c4c4;font-weight:normal;font-style:normal;font-family:'Liberation Mono', monospace;transform:scaleX(0.7289);-webkit-text-stroke:0.00px #c4c4c4;letter-spacing:0.00px;">C:\Users\Roman Dávid&gt;Signal monitoring_PF 3.7m_Lučenec/Slovakia_Eut 9B-9°E_f0=12 149 V Mediaset_01/2023</div>
<svg class="a" style="left:1193px;top:39px" width="7" height="20"><polyline points="3.2,7.4 5.6,4.2 8,7.4" fill="none" stroke="#555" stroke-width="1.2"/><polyline points="3.2,14 5.6,17.2 8,14" fill="none" stroke="#555" stroke-width="1.2"/></svg>
<svg class="a" style="left:566px;top:0" width="68" height="89" viewBox="566 0 68 89">
<rect x="566" y="0" width="68" height="89" fill="#fff"/>
<path d="M 576.5 70 A 30.5 38 0 0 1 619.3 16.2" fill="none" stroke="#1e2a96" stroke-width="1.5"/>
<path d="M 621.2 19 A 30.5 38 0 0 1 630.6 48.5" fill="none" stroke="#1e2a96" stroke-width="1.6"/>
<path d="M 630.4 53.5 A 30.5 38 0 0 1 622.8 74.2" fill="none" stroke="#1e2a96" stroke-width="1.5"/>
<path d="M 577.9 73.9 L 622.6 73.9" stroke="#1e2a96" stroke-width="1.7"/>
<path d="M 615.7 30 Q 619.5 36.5 620.8 45.5" fill="none" stroke="#d42828" stroke-width="2.1"/>
<path d="M 618.8 24.3 Q 624.8 34 626.5 47" fill="none" stroke="#d42828" stroke-width="2.1"/>
<path d="M 589.8 12.4 Q 596 22 600 45 Q 603.5 62 606.4 71.4" fill="none" stroke="#2a3090" stroke-width="1.1"/>
<path d="M 589.8 12.4 Q 590 30 592.4 49.6 Q 591 53 589 54 M 592.4 49.6 Q 596 54 600 62 Q 603 67 605.5 70" fill="none" stroke="#3a4098" stroke-width="1"/>
<path d="M 591 14 Q 595 20 598 30" fill="none" stroke="#7a80c0" stroke-width="0.7"/>
<path d="M 601 40.5 L 612.5 40.5 L 607.5 50" fill="none" stroke="#7a80c0" stroke-width="0.8"/>
<circle cx="586.7" cy="56.4" r="2.6" fill="none" stroke="#3a40a0" stroke-width="1.1"/>
<path d="M 583 60 Q 587 64 591 52 M 587 60 Q 585 70 578.5 74 M 588 62 Q 590 70 593 74" fill="none" stroke="#2a3090" stroke-width="1"/>
</svg>
<div class="t" style="left:568.3px;top:75.5px;font-size:12.5px;line-height:12.5px;font-weight:bold;font-family:'Liberation Serif',serif;transform:scaleX(0.705);-webkit-text-stroke:0.45px currentColor;color:#1e2580"><span style="color:#d42424">DX</span>SATCS.COM</div>
<div class="a" style="left:11.3px;top:199.5px;width:3px;height:5.5px;background:#d3d3d3"></div>
<div class="a" style="left:11.3px;top:208.0px;width:3px;height:5.0px;background:#d3d3d3"></div>
<div class="a" style="left:11.3px;top:89.5px;width:3px;height:5.5px;background:#d3d3d3"></div>
<div class="a" style="left:11.3px;top:98.0px;width:3px;height:5.0px;background:#d3d3d3"></div>
</body></html>
